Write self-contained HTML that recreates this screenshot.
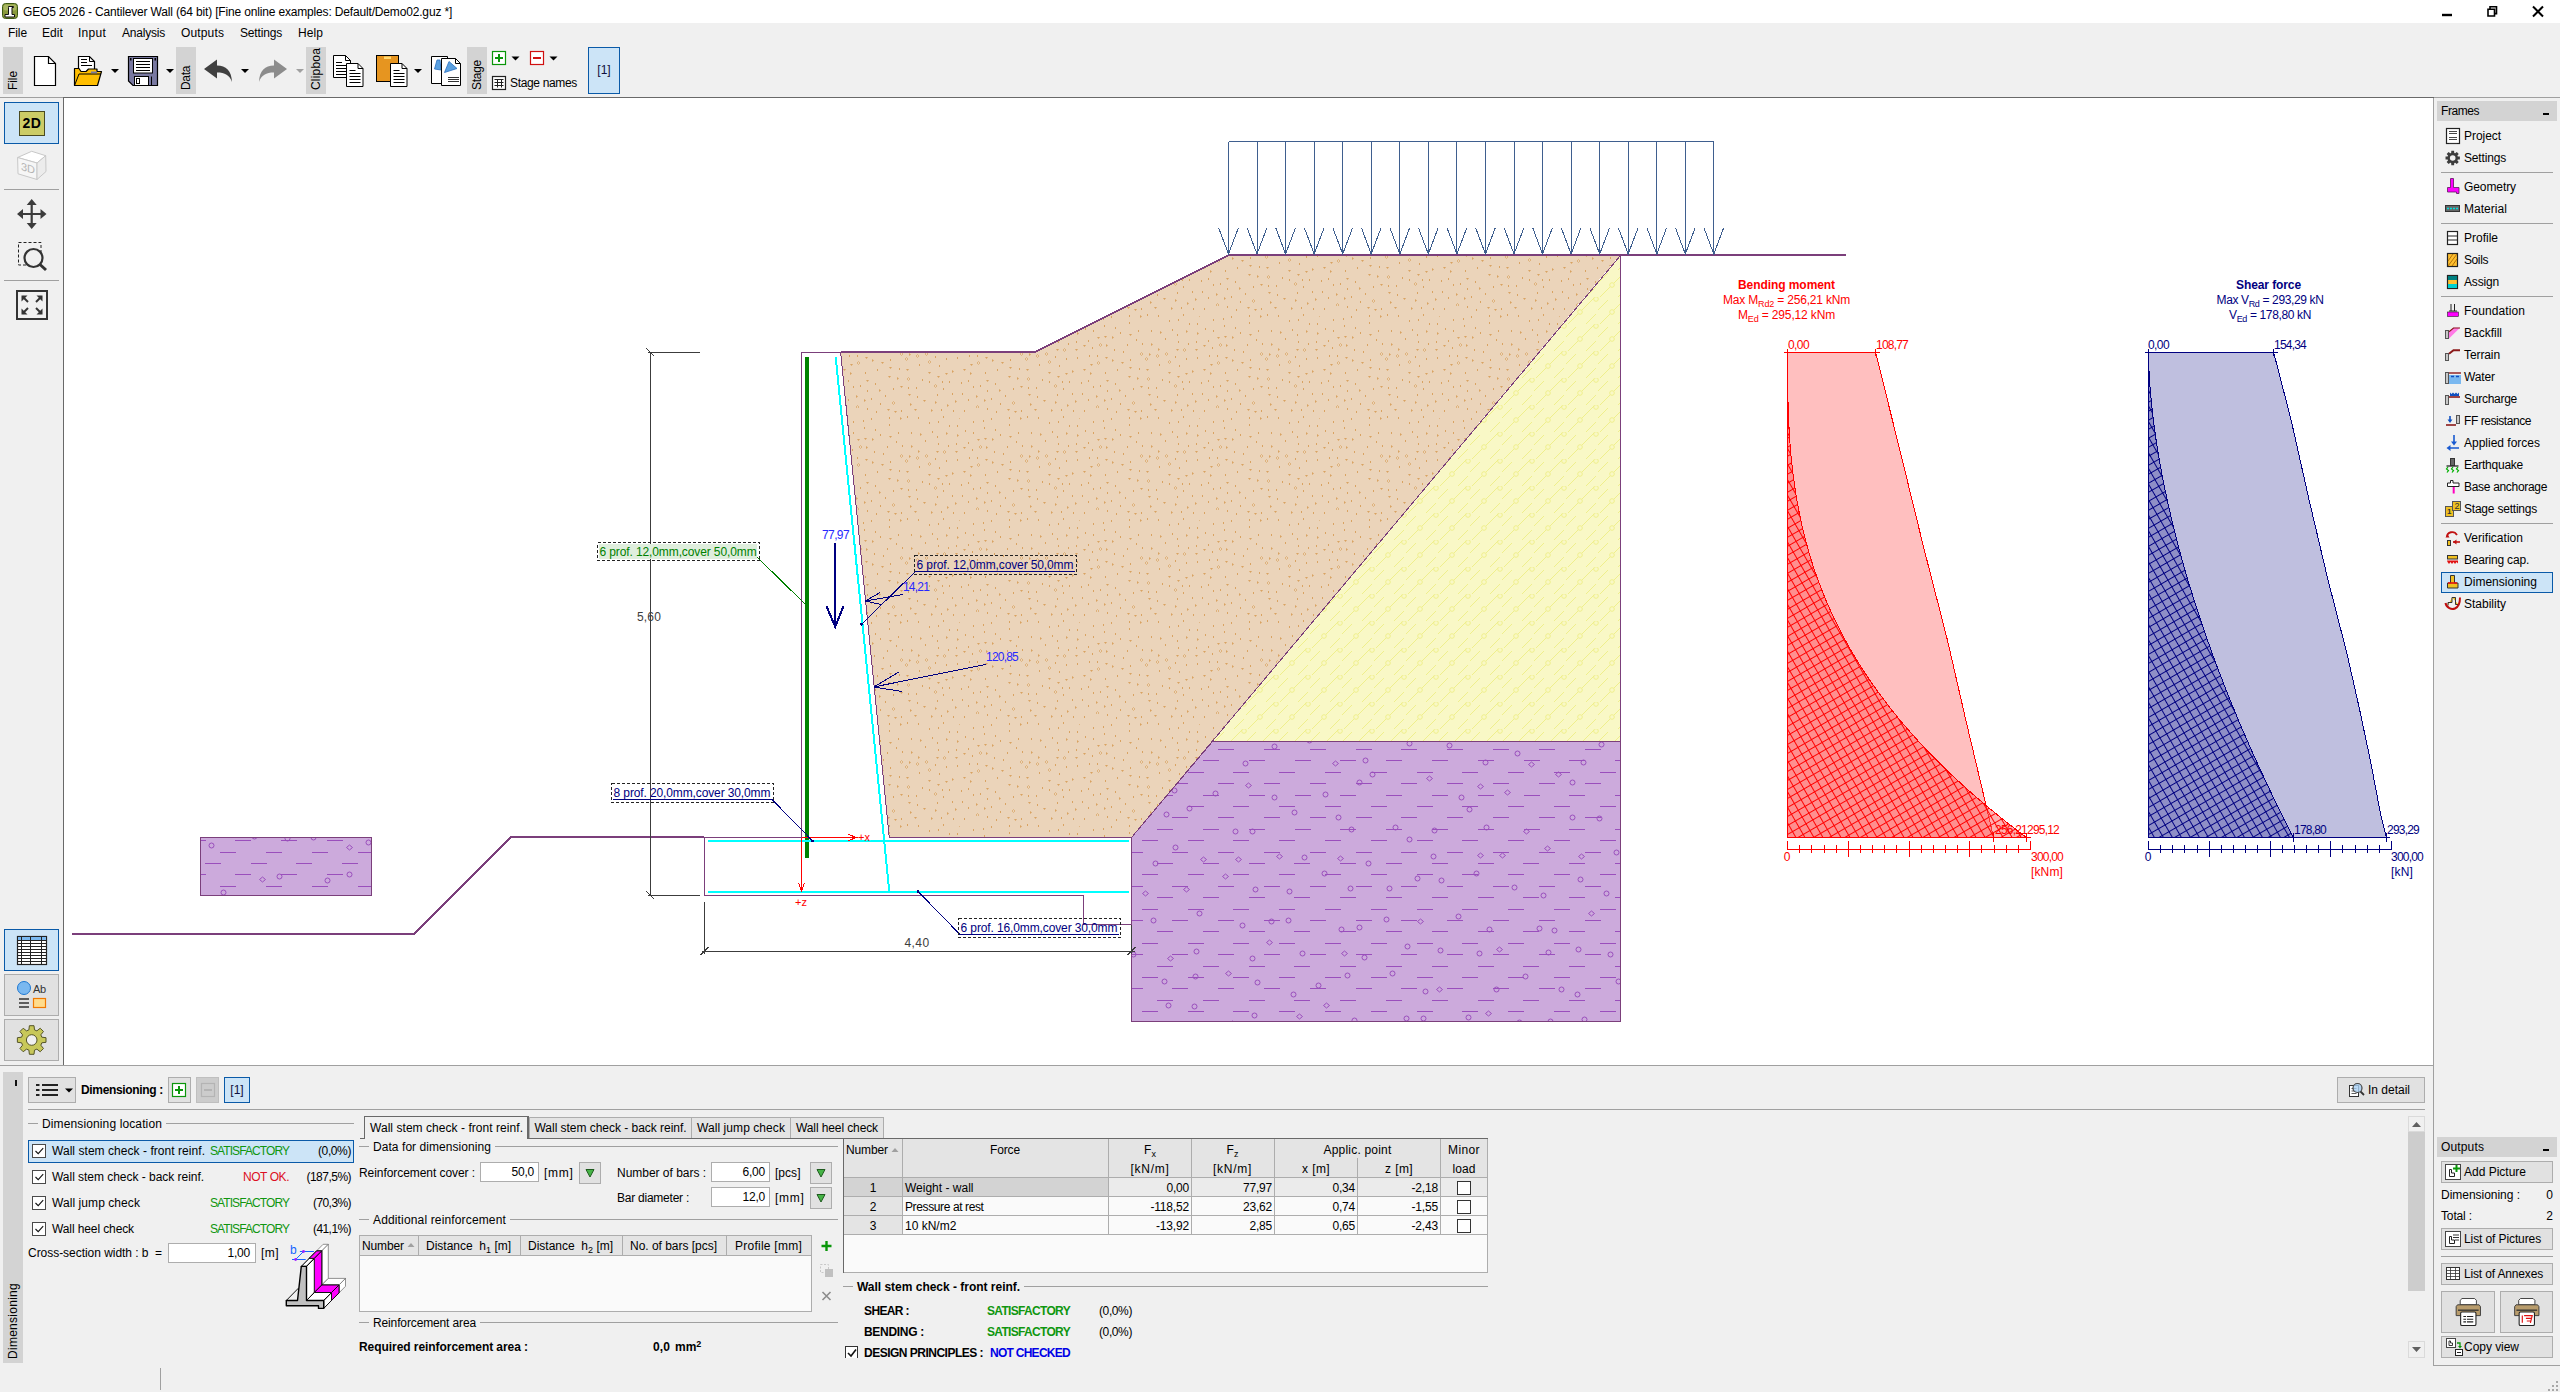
<!DOCTYPE html>
<html><head><meta charset="utf-8"><title>GEO5 2026 - Cantilever Wall</title>
<style>
html,body{margin:0;padding:0}
body{width:2560px;height:1392px;position:relative;overflow:hidden;background:#f0f0f0;font-family:"Liberation Sans",sans-serif;font-size:12px;color:#000}
.b{position:absolute;display:block}
.t{position:absolute;white-space:pre;line-height:16px;height:16px}
sub,sup{font-size:9px;line-height:0}
sub{vertical-align:-3px}
sup{vertical-align:4px}
</style></head><body>
<div class="b" style="left:0px;top:0px;width:2560px;height:23px;background:#fff;"></div>
<svg class="b" style="left:2px;top:3px" width="17" height="17" viewBox="2 3 17 17" ><rect x="2.5" y="3.5" width="15" height="15" rx="3" fill="#8a9a3c" stroke="#3c5a14"/><rect x="3.5" y="4.5" width="13" height="6" rx="2" fill="#b4c070" opacity=".7"/><path d="M8.5 6.5h5v1h-1.5v7h2.5v2.5h-9.5v-2.5h3.5v-7z" fill="#fff" stroke="#111" stroke-width="1"/></svg>
<div class="t" style="left:23px;top:3.5px;letter-spacing:-0.165px;">GEO5 2026 - Cantilever Wall (64 bit) [Fine online examples: Default/Demo02.guz *]</div>
<svg class="b" style="left:2430px;top:0px" width="130" height="23" viewBox="2430 0 130 23" ><path d="M2442 15h10" stroke="#000" stroke-width="2.4" fill="none"/><path d="M2488 9.2h6.5v6.8h-6.5zM2490 9v-2.2h6.5v6.8h-2.2" stroke="#000" stroke-width="1.6" fill="none"/><path d="M2533 6.5l10 10M2543 6.5l-10 10" stroke="#000" stroke-width="2" fill="none"/></svg>
<div class="t" style="left:8px;top:24.5px;letter-spacing:-0.086px;">File</div>
<div class="t" style="left:42px;top:24.5px;letter-spacing:0.082px;">Edit</div>
<div class="t" style="left:78px;top:24.5px;letter-spacing:0.266px;">Input</div>
<div class="t" style="left:122px;top:24.5px;letter-spacing:-0.211px;">Analysis</div>
<div class="t" style="left:181px;top:24.5px;letter-spacing:0.143px;">Outputs</div>
<div class="t" style="left:240px;top:24.5px;letter-spacing:-0.168px;">Settings</div>
<div class="t" style="left:298px;top:24.5px;letter-spacing:0.078px;">Help</div>
<div class="b" style="left:3px;top:47px;width:20px;height:47px;background:#d3d3d3;"></div>
<div class="t" style="left:5px;top:90px;width:19px;transform:rotate(-90deg);transform-origin:0 0;letter-spacing:-0.086px;">File</div>
<div class="b" style="left:176px;top:47px;width:20px;height:47px;background:#d3d3d3;"></div>
<div class="t" style="left:178px;top:90px;width:24px;transform:rotate(-90deg);transform-origin:0 0;letter-spacing:-0.336px;">Data</div>
<div class="b" style="left:306px;top:47px;width:20px;height:47px;background:#d3d3d3;"></div>
<div class="t" style="left:308px;top:90px;width:42px;transform:rotate(-90deg);transform-origin:0 0;letter-spacing:0.185px;">Clipboa</div>
<div class="b" style="left:467px;top:47px;width:20px;height:47px;background:#d3d3d3;"></div>
<div class="t" style="left:469px;top:90px;width:30px;transform:rotate(-90deg);transform-origin:0 0;letter-spacing:-0.269px;">Stage</div>
<svg class="b" style="left:0px;top:45px" width="640" height="52" viewBox="0 45 640 52" ><path d="M34.5 56.5h14l7 7v22h-21z" fill="#fff" stroke="#000" stroke-width="1.2"/><path d="M48.5 56.5v7h7" fill="none" stroke="#000" stroke-width="1.2"/><path d="M78.5 56.5h11l5 5v13h-16z" fill="#fff" stroke="#000" stroke-width="1.2"/><path d="M89.5 56.5v5h5" fill="none" stroke="#000"/><path d="M81 59.5h6M81 62.5h6M81 65.5h11" stroke="#000" stroke-width="1"/><path d="M74.5 68.5h4.5l2 3h5l2.5-2.5h8.5v2.5h4.5l-4 14h-23z" fill="#ffbe00" stroke="#000" stroke-width="1.2" stroke-linejoin="round"/><path d="M74.5 85.5l4.5-11.5h22" fill="none" stroke="#000" stroke-width="1"/><rect x="91" y="71.5" width="6" height="1.8" fill="#7a7aa0"/><path d="M111 69h8l-4 4z" fill="#000"/><path d="M128.5 56.5h29v29h-24.5l-4.5-4.5z" fill="#7878a0" stroke="#000" stroke-width="1.2"/><rect x="133.5" y="58.5" width="19" height="14.5" fill="#fff" stroke="#000"/><path d="M136 61.5h14M136 64.5h14M136 67.5h14M136 70.5h14" stroke="#000" stroke-width="1"/><rect x="134.5" y="76.5" width="14" height="9" fill="#fff" stroke="#000"/><rect x="136.5" y="78.5" width="3" height="5" fill="#fff" stroke="#000"/><rect x="130" y="58" width="1.5" height="2.5" fill="#000"/><rect x="154.5" y="58" width="1.5" height="2.5" fill="#000"/><path d="M151.5 76.5v9" stroke="#000" stroke-width="1"/><path d="M166 69h8l-4 4z" fill="#000"/><path d="M204 69l13-9.5v6c9 0 14.5 5 15 16.5c-2.5-7-7-9.5-15-9.5v6z" fill="#404040"/><path d="M241 69h8l-4 4z" fill="#000"/><path d="M287 69l-13-9.5v6c-9 0-14.5 5-15 16.5c2.5-7 7-9.5 15-9.5v6z" fill="#8c8c8c"/><path d="M296 69h8l-4 4z" fill="#a0a0a0"/><path d="M333.5 55.5h12l5 5v17h-17z" fill="#fff" stroke="#000" stroke-width="1"/><path d="M345.5 55.5v5h5" fill="none" stroke="#000" stroke-width="1"/><path d="M336 62.5h6M336 65.5h12M336 68.5h12M336 71.5h12M336 74.5h12" stroke="#000" stroke-width="1"/><path d="M346.5 63.5h11.5l5 5v18h-16.5z" fill="#fff" stroke="#000" stroke-width="1"/><path d="M358 63.5v5h5" fill="none" stroke="#000" stroke-width="1"/><path d="M349.5 70.5h6M349.5 73.5h11M349.5 76.5h11M349.5 79.5h11M349.5 82.5h11" stroke="#000" stroke-width="1"/><rect x="376.5" y="55.5" width="22" height="26" fill="#e69520" stroke="#000" stroke-width="1"/><rect x="384" y="56.5" width="7" height="2.5" fill="#ffd870"/><path d="M390.5 63.5h11.5l5 5v18h-16.5z" fill="#fff" stroke="#000" stroke-width="1"/><path d="M402 63.5v5h5" fill="none" stroke="#000" stroke-width="1"/><path d="M393.5 70.5h6M393.5 73.5h11M393.5 76.5h11M393.5 79.5h11M393.5 82.5h11" stroke="#000" stroke-width="1"/><path d="M414 69h8l-4 4z" fill="#000"/><path d="M431.5 56.5h16v27h-16z" fill="#fff" stroke="#000"/><path d="M437 60l3 0l1 10l-6.5-1z" fill="#5aa0e0" stroke="#2a70c0" stroke-width=".8"/><path d="M441.5 58.5h14l5 5v22h-19z" fill="#fff" stroke="#000" stroke-width="1"/><path d="M455.5 58.5v5h5" fill="none" stroke="#000" stroke-width="1"/><path d="M449 61.5l8 7l-12.5 4z" fill="#5aa0e0" stroke="#2a70c0" stroke-width=".8"/><path d="M448 77.5h11M448 79.5h11M448 81.5h11" stroke="#333" stroke-width="1"/><rect x="492.5" y="51.5" width="13" height="13" fill="#fff" stroke="#0a960a" stroke-width="1.2"/><path d="M495 58h8M499 54v8" stroke="#0a960a" stroke-width="2"/><path d="M511.5 56.5h8l-4 4z" fill="#000"/><rect x="530.5" y="51.5" width="13" height="13" fill="#fff" stroke="#d01010" stroke-width="1.2"/><path d="M533 58h8" stroke="#d01010" stroke-width="2"/><path d="M549.5 56.5h8l-4 4z" fill="#000"/><rect x="492.5" y="76.5" width="13" height="13" fill="#fff" stroke="#222" stroke-width="1.2"/><path d="M494.5 79.5h9M494.5 82.5h9M494.5 85.5h9M497.5 79.5v8M501.5 79.5v8" stroke="#222" stroke-width="1"/></svg>
<div class="t" style="left:510px;top:74.5px;letter-spacing:-0.335px;">Stage names</div>
<div class="b" style="left:588px;top:47px;width:32px;height:47px;background:#cce4f7;box-shadow:inset 0 0 0 1px #0a5aa8;"></div>
<div class="t" style="left:597.3px;top:62px;color:#101040;">[1]</div>
<div class="b" style="left:0px;top:97px;width:2560px;height:1px;background:#a0a0a0;"></div>
<div class="b" style="left:64px;top:98px;width:2369px;height:967px;background:#fff;"></div>
<div class="b" style="left:63px;top:97px;width:1px;height:969px;background:#696969;"></div>
<div class="b" style="left:63px;top:97px;width:2371px;height:1px;background:#696969;"></div>
<div class="b" style="left:2433px;top:98px;width:1px;height:1268px;background:#a0a0a0;"></div>
<div class="b" style="left:0px;top:1065px;width:2434px;height:1px;background:#a0a0a0;"></div>
<div class="b" style="left:2433px;top:1365px;width:127px;height:1px;background:#a0a0a0;"></div>
<div class="b" style="left:4px;top:102px;width:55px;height:42px;background:#cce4f7;box-shadow:inset 0 0 0 1px #0a5aa8;"></div>
<div class="b" style="left:19px;top:110.5px;width:26px;height:25.5px;background:#cccc66;box-shadow:inset 0 0 0 1px #4a4a20;"></div>
<div class="t" style="left:22.5px;top:114.5px;letter-spacing:0.555px;font-weight:bold;font-size:14px;">2D</div>
<svg class="b" style="left:0px;top:98px" width="63" height="232" viewBox="0 98 63 232" ><path d="M17.6 157.5L31.7 151.3L45.7 155.7L37 163z" fill="#fff" stroke="#c8c8c8"/><path d="M17.6 157.5L37 163V179.5L18 173.8z" fill="#f6f6f6" stroke="#c8c8c8"/><path d="M37 163L45.7 155.7L46 171.5L37 179.5z" fill="#ececec" stroke="#c8c8c8"/><path d="M4 189.5h55M4 280.5h55" stroke="#a0a0a0"/><path d="M31.7 203v22M20.5 214h22" stroke="#3c3c3c" stroke-width="2.2"/><path d="M31.7 199l5 6h-10zM31.7 229l5-6h-10zM17 214l6-5v10zM46.5 214l-6-5v10z" fill="#3c3c3c"/><path d="M18.5 242.5h22.5v22.5h-22.5z" fill="none" stroke="#222" stroke-dasharray="3 2"/><circle cx="33.5" cy="258" r="9" fill="#f0f0f0" stroke="#333" stroke-width="2.2"/><path d="M40 264.5l6 5.5" stroke="#333" stroke-width="3"/><rect x="17" y="291" width="30" height="28" fill="none" stroke="#333" stroke-width="2"/><path d="M22.5 296.5l5.5 5.5" stroke="#333" stroke-width="2"/><path d="M21.5 295.5h6l-6 6z" fill="#333"/><path d="M41.5 296.5l-5.5 5.5" stroke="#333" stroke-width="2"/><path d="M42.5 295.5h-6l6 6z" fill="#333"/><path d="M22.5 313.5l5.5 -5.5" stroke="#333" stroke-width="2"/><path d="M21.5 314.5h6l-6 -6z" fill="#333"/><path d="M41.5 313.5l-5.5 -5.5" stroke="#333" stroke-width="2"/><path d="M42.5 314.5h-6l6 -6z" fill="#333"/></svg>
<div class="t" style="left:20.7px;top:160px;letter-spacing:-0.211px;color:#b4b4b4;font-size:11px;transform:skewY(16deg);">3D</div>
<div class="b" style="left:4px;top:929px;width:55px;height:42px;background:#cce4f7;box-shadow:inset 0 0 0 1px #0a5aa8;"></div>
<div class="b" style="left:4px;top:974px;width:55px;height:42px;background:#e1e1e1;box-shadow:inset 0 0 0 1px #adadad;"></div>
<div class="b" style="left:4px;top:1019px;width:55px;height:42px;background:#e1e1e1;box-shadow:inset 0 0 0 1px #adadad;"></div>
<svg class="b" style="left:0px;top:925px" width="63" height="139" viewBox="0 925 63 139" ><rect x="17.5" y="936.5" width="29" height="28" fill="#fff" stroke="#222" stroke-width="1.2"/><rect x="18" y="937" width="28" height="3" fill="#7ab8f0"/><path d="M17.5 940.5h29" stroke="#222"/><path d="M17.5 943.5h29" stroke="#222"/><path d="M17.5 946.5h29" stroke="#222"/><path d="M17.5 949.5h29" stroke="#222"/><path d="M17.5 952.5h29" stroke="#222"/><path d="M17.5 955.5h29" stroke="#222"/><path d="M17.5 958.5h29" stroke="#222"/><path d="M17.5 961.5h29" stroke="#222"/><path d="M21.5 936.5v28M30.5 936.5v28M41.5 936.5v28" stroke="#222"/><circle cx="24" cy="988" r="6.5" fill="#7ab8f0" stroke="#1e78d2"/><path d="M19 999h10M19 1003h10M19 1007h10" stroke="#333" stroke-width="1.4"/><rect x="33.5" y="998.5" width="12" height="9" fill="#ffdc8c" stroke="#f07800" stroke-width="1.2"/><polygon points="28.9,1029.88 29.39,1025.69 34.01,1025.69 34.5,1029.88 36.88,1030.86 40.19,1028.24 43.46,1031.51 40.84,1034.82 41.82,1037.2 46.01,1037.69 46.01,1042.31 41.82,1042.8 40.84,1045.18 43.46,1048.49 40.19,1051.76 36.88,1049.14 34.5,1050.12 34.01,1054.31 29.39,1054.31 28.9,1050.12 26.52,1049.14 23.21,1051.76 19.94,1048.49 22.56,1045.18 21.58,1042.8 17.39,1042.31 17.39,1037.69 21.58,1037.2 22.56,1034.82 19.94,1031.51 23.21,1028.24 26.52,1030.86" fill="#c8c85a" stroke="#555528" stroke-width="1" stroke-linejoin="round"/><circle cx="31.7" cy="1040" r="5.3" fill="#f0f0f0" stroke="#555528"/></svg>
<div class="t" style="left:33px;top:980.5px;letter-spacing:-0.234px;color:#333;font-size:11px;">Ab</div>
<div class="b" style="left:2437px;top:101px;width:120px;height:20px;background:#d3d3d3;"></div>
<div class="t" style="left:2441px;top:102.5px;letter-spacing:-0.445px;">Frames</div>
<div class="b" style="left:2543px;top:113px;width:6px;height:2px;background:#000;"></div>
<div class="b" style="left:2441px;top:172px;width:112px;height:1px;background:#a0a0a0;"></div>
<div class="b" style="left:2441px;top:223px;width:112px;height:1px;background:#a0a0a0;"></div>
<div class="b" style="left:2441px;top:296px;width:112px;height:1px;background:#a0a0a0;"></div>
<div class="b" style="left:2441px;top:523px;width:112px;height:1px;background:#a0a0a0;"></div>
<div class="b" style="left:2441px;top:571.5px;width:112px;height:21px;background:#cce4f7;box-shadow:inset 0 0 0 1px #0a5aa8;"></div>
<div class="t" style="left:2464px;top:127.5px;letter-spacing:-0.049px;">Project</div>
<div class="t" style="left:2464px;top:149.5px;letter-spacing:-0.168px;">Settings</div>
<div class="t" style="left:2464px;top:178.5px;letter-spacing:-0.084px;">Geometry</div>
<div class="t" style="left:2464px;top:200.5px;letter-spacing:0.039px;">Material</div>
<div class="t" style="left:2464px;top:229.5px;letter-spacing:-0.002px;">Profile</div>
<div class="t" style="left:2464px;top:251.5px;letter-spacing:-0.403px;">Soils</div>
<div class="t" style="left:2464px;top:273.5px;letter-spacing:-0.169px;">Assign</div>
<div class="t" style="left:2464px;top:302.5px;letter-spacing:0.097px;">Foundation</div>
<div class="t" style="left:2464px;top:324.5px;letter-spacing:-0.002px;">Backfill</div>
<div class="t" style="left:2464px;top:346.5px;letter-spacing:-0.098px;">Terrain</div>
<div class="t" style="left:2464px;top:368.5px;letter-spacing:-0.113px;">Water</div>
<div class="t" style="left:2464px;top:390.5px;letter-spacing:-0.262px;">Surcharge</div>
<div class="t" style="left:2464px;top:412.5px;letter-spacing:-0.436px;">FF resistance</div>
<div class="t" style="left:2464px;top:434.5px;letter-spacing:-0.002px;">Applied forces</div>
<div class="t" style="left:2464px;top:456.5px;letter-spacing:-0.236px;">Earthquake</div>
<div class="t" style="left:2464px;top:478.5px;letter-spacing:-0.312px;">Base anchorage</div>
<div class="t" style="left:2464px;top:500.5px;letter-spacing:-0.215px;">Stage settings</div>
<div class="t" style="left:2464px;top:529.5px;letter-spacing:0.025px;">Verification</div>
<div class="t" style="left:2464px;top:551.5px;letter-spacing:-0.197px;">Bearing cap.</div>
<div class="t" style="left:2464px;top:573.5px;letter-spacing:0.023px;">Dimensioning</div>
<div class="t" style="left:2464px;top:595.5px;letter-spacing:-0.002px;">Stability</div>
<svg class="b" style="left:2440px;top:125px" width="25" height="490" viewBox="2440 125 25 490" ><rect x="2446.5" y="128.5" width="13" height="15" fill="#fff" stroke="#222" stroke-width="1.2"/><path d="M2449 131.5h8" stroke="#333" stroke-width=".9"/><path d="M2449 133.5h8" stroke="#333" stroke-width=".9"/><path d="M2449 137.5h8" stroke="#333" stroke-width=".9"/><path d="M2449 139.5h8" stroke="#333" stroke-width=".9"/><path d="M2449 143.5h8" stroke="#333" stroke-width=".9"/><polygon points="2451.13,152.94 2451.32,150.83 2454.08,150.83 2454.27,152.94 2455.17,153.31 2456.79,151.96 2458.74,153.91 2457.39,155.53 2457.76,156.43 2459.87,156.62 2459.87,159.38 2457.76,159.57 2457.39,160.47 2458.74,162.09 2456.79,164.04 2455.17,162.69 2454.27,163.06 2454.08,165.17 2451.32,165.17 2451.13,163.06 2450.23,162.69 2448.61,164.04 2446.66,162.09 2448.01,160.47 2447.64,159.57 2445.53,159.38 2445.53,156.62 2447.64,156.43 2448.01,155.53 2446.66,153.91 2448.61,151.96 2450.23,153.31" fill="#3c3c3c"/><circle cx="2452.7" cy="158" r="2.8" fill="#f0f0f0"/><path d="M2450.5 178.5h3v9h5.5v6h-2.5v-1.5h-9v-4.5h3z" fill="#ff00ff" stroke="#5a1a5a" stroke-width=".8"/><rect x="2445.5" y="205.5" width="14" height="6" fill="#666" stroke="#333"/><path d="M2447 208.5h11" stroke="#00e0e0" stroke-width="1.6" stroke-dasharray="2 1"/><rect x="2447.5" y="231.5" width="10" height="13" fill="#fff" stroke="#222" stroke-width="1.2"/><path d="M2447.5 236h10M2447.5 240h10" stroke="#222"/><rect x="2447.5" y="253.5" width="10" height="13" fill="#ffc030" stroke="#222" stroke-width="1.2"/><path d="M2448 261l5-7M2448 266l9-12M2452 266l5-7" stroke="#a06000" stroke-width=".8"/><rect x="2447.5" y="275.5" width="10" height="13" fill="#ffc030" stroke="#222" stroke-width="1.2"/><rect x="2448" y="276" width="9" height="4" fill="#008080"/><rect x="2448" y="284" width="9" height="4" fill="#00d0d0"/><path d="M2451 304v7M2454.5 304v7M2449 311h8" stroke="#222" fill="none"/><rect x="2447.5" y="312" width="11" height="4.5" fill="#ff00ff" stroke="#222" stroke-width=".6"/><rect x="2445.5" y="330.5" width="3" height="8" fill="#c8c8c8" stroke="#555"/><path d="M2449 338.5v-7l4.5-3.8h6.5z" fill="#ff7ae6"/><path d="M2449 331.8l4.5-3.8h6.5" stroke="#8b1a1a" stroke-width="1.2" fill="none"/><rect x="2445.5" y="353.5" width="3" height="7" fill="#c8c8c8" stroke="#555"/><path d="M2449 353.8l4.5-3.6h6.5" stroke="#8b1a1a" stroke-width="2" fill="none"/><rect x="2445.5" y="372.5" width="3" height="11" fill="#c8c8c8" stroke="#555"/><rect x="2449" y="375" width="12" height="9" fill="#7ab8f0"/><path d="M2449 373h12" stroke="#8b1a1a" stroke-width="1.4"/><path d="M2451 376.5h3M2456 376.5h3" stroke="#1050c0" stroke-width="1.4"/><rect x="2445.5" y="395.5" width="3" height="9" fill="#c8c8c8" stroke="#555"/><path d="M2449 397h11" stroke="#8b1a1a" stroke-width="1.6"/><path d="M2450 396v-3.5l1.5 1.5l1.5-1.5l1.5 1.5l1.5-1.5l1.5 1.5l1.5-1.5v3.5z" fill="#1050c0"/><rect x="2456.5" y="415.5" width="3" height="8" fill="#c8c8c8" stroke="#555"/><path d="M2446 425h10" stroke="#8b1a1a" stroke-width="1.6"/><path d="M2450 416v5" stroke="#1050c0" stroke-width="1.6"/><path d="M2447.5 419.5h5l-2.5 3.5z" fill="#1050c0"/><path d="M2454 435v8M2448 448h11" stroke="#1a5ad0" stroke-width="1.6"/><path d="M2451 441.5h6l-3 4z M2450.5 445v6l-4-3z" fill="#1a5ad0"/><rect x="2450.5" y="458.5" width="4" height="7" fill="#666" stroke="#333"/><path d="M2446.5 466h12" stroke="#333" stroke-width="1.4"/><path d="M2448 467l-1.5 2l2 1.5l-1.5 2M2453 467l-1.5 2l2 1.5l-1.5 2M2458 467l-1.5 2l2 1.5l-1.5 2" stroke="#00b000" stroke-width="1.2" fill="none"/><path d="M2450.5 480.5h2.5v2.5h6v3.5h-11.5v-3.5h3z" fill="#fff" stroke="#222"/><path d="M2453.7 487v6.5" stroke="#ff00c0" stroke-width="2"/><rect x="2445.5" y="506.5" width="8" height="10" fill="#f0c020" stroke="#555"/><rect x="2452.5" y="501.5" width="8" height="9" fill="#f0c020" stroke="#555"/><path d="M2447 537c0-5 7-7 10-2" stroke="#c01010" stroke-width="1.8" fill="none"/><path d="M2445.5 537.5h4l-2-3.5z" fill="#c01010"/><rect x="2447.5" y="540.5" width="3" height="5" fill="#f0c020" stroke="#333"/><path d="M2453 542h7" stroke="#c01010" stroke-width="1.6"/><path d="M2453 542l3.5-2.5v5z" fill="#c01010"/><rect x="2447.5" y="555.5" width="10" height="3.5" fill="#f0c020" stroke="#333"/><path d="M2447 560.5h11v3l-1.5-1.5l-1.5 2l-1.5-2l-1.5 2l-1.5-2l-1.5 2l-1.5-2z" fill="#e01010"/><path d="M2450.5 575.5h4v7.5h3.5v5h-10.5v-5h3z" fill="#f0c020" stroke="#333"/><path d="M2448 583h9" stroke="#e01010" stroke-width="1.6"/><path d="M2452 597.5h3.5v7h3M2452 597.5v5h-4v3" stroke="#333" fill="#f0c020"/><path d="M2445.5 603c1 5 6 7 9.5 5.5s5-5 5-11" stroke="#c01010" stroke-width="2" fill="none"/></svg>
<div class="t" style="left:2447px;top:504px;color:#333;font-weight:bold;font-size:8px;">1</div>
<div class="t" style="left:2454.5px;top:498px;color:#333;font-size:9px;">2</div>
<div class="b" style="left:2437px;top:1137px;width:120px;height:20px;background:#d3d3d3;"></div>
<div class="t" style="left:2441px;top:1138.5px;letter-spacing:0.143px;">Outputs</div>
<div class="b" style="left:2543px;top:1149px;width:6px;height:2px;background:#000;"></div>
<div class="b" style="left:2441px;top:1161px;width:112px;height:22px;background:#e1e1e1;box-shadow:inset 0 0 0 1px #adadad;"></div>
<div class="t" style="left:2464px;top:1163.5px;letter-spacing:-0.001px;">Add Picture</div>
<div class="t" style="left:2441px;top:1186.5px;letter-spacing:-0.027px;">Dimensioning :</div>
<div class="t" style="left:2546.3px;top:1186.5px;">0</div>
<div class="t" style="left:2441px;top:1207.5px;letter-spacing:-0.143px;">Total :</div>
<div class="t" style="left:2546.3px;top:1207.5px;">2</div>
<div class="b" style="left:2441px;top:1228px;width:112px;height:22px;background:#e1e1e1;box-shadow:inset 0 0 0 1px #adadad;"></div>
<div class="t" style="left:2464px;top:1230.5px;letter-spacing:-0.104px;">List of Pictures</div>
<div class="b" style="left:2441px;top:1256px;width:112px;height:1px;background:#a0a0a0;"></div>
<div class="b" style="left:2441px;top:1263px;width:112px;height:22px;background:#e1e1e1;box-shadow:inset 0 0 0 1px #adadad;"></div>
<div class="t" style="left:2464px;top:1265.5px;letter-spacing:-0.157px;">List of Annexes</div>
<div class="b" style="left:2441px;top:1291px;width:54px;height:42px;background:#e1e1e1;box-shadow:inset 0 0 0 1px #adadad;"></div>
<div class="b" style="left:2500px;top:1291px;width:53px;height:42px;background:#e1e1e1;box-shadow:inset 0 0 0 1px #adadad;"></div>
<div class="b" style="left:2441px;top:1336px;width:112px;height:22px;background:#e1e1e1;box-shadow:inset 0 0 0 1px #adadad;"></div>
<div class="t" style="left:2464px;top:1338.5px;letter-spacing:-0.04px;">Copy view</div>
<svg class="b" style="left:2440px;top:1160px" width="116" height="200" viewBox="2440 1160 116 200" ><rect x="2445.5" y="1164.5" width="15" height="15" fill="#fff" stroke="#444"/><path d="M2449.5 1169.5v7h5v-3.5h-3v-3.5z" fill="none" stroke="#222"/><path d="M2453 1168.5h7M2456.5 1165v7" stroke="#0a960a" stroke-width="2"/><rect x="2445.5" y="1231.5" width="15" height="15" fill="#fff" stroke="#444"/><path d="M2449.5 1236.5v7h5v-3.5h-3v-3.5z" fill="none" stroke="#222"/><path d="M2453 1235h6M2453 1237.5h6M2455 1240h4" stroke="#333"/><rect x="2446.5" y="1267.5" width="13" height="12" fill="#fff" stroke="#333"/><path d="M2446.5 1270.5h13M2446.5 1273.5h13M2446.5 1276.5h13M2450.5 1267.5v12M2455.5 1267.5v12" stroke="#333" stroke-width=".8"/><g transform="translate(2468.3 1312) scale(.9) translate(-2468 -1311)"><path d="M2461 1296h14l2 2v5h-18v-5z" fill="#fff" stroke="#333"/><path d="M2456 1303h24l1.5 2v10h-27v-10z" fill="#b89c6c" stroke="#333"/><path d="M2456.5 1309h23" stroke="#333" stroke-width="1.5"/><rect x="2459.5" y="1311" width="17" height="15" rx="1.5" fill="#fff" stroke="#222" stroke-width="1.2"/><path d="M2462.5 1316h11M2462.5 1319h11M2462.5 1322h11" stroke="#222" stroke-width="1.2" stroke-dasharray="3 1 7"/></g><g transform="translate(2526.8 1312) scale(.9) translate(-2526.5 -1311)"><path d="M2519.5 1296h14l2 2v5h-18v-5z" fill="#fff" stroke="#333"/><path d="M2514.5 1303h24l1.5 2v10h-27v-10z" fill="#b89c6c" stroke="#333"/><path d="M2515 1309h23" stroke="#333" stroke-width="1.5"/><rect x="2518" y="1311" width="17" height="15" rx="1.5" fill="#fff" stroke="#222" stroke-width="1.2"/><path d="M2521.5 1315v8M2523.5 1315h9l-2 8M2525.5 1318h6M2526.5 1321h5" stroke="#e01010" stroke-width="1.3" fill="none"/></g><rect x="2446.5" y="1338.5" width="9" height="9" fill="#fff" stroke="#444"/><path d="M2449 1341v4.5h3.5v-2.5h-2v-2z" fill="none" stroke="#222" stroke-width=".9"/><rect x="2455.5" y="1349.5" width="7" height="6" fill="#fff" stroke="#222"/><path d="M2457 1352.5h4" stroke="#222"/><path d="M2457 1343h3v4" stroke="#0a960a" stroke-width="1.3" fill="none"/><path d="M2458 1346h4l-2 2.5z" fill="#0a960a"/></svg>
<svg class="b" style="left:2540px;top:1375px" width="20" height="17" viewBox="2540 1375 20 17" ><rect x="2556" y="1381" width="2" height="2" fill="#a8a8a8"/><rect x="2556" y="1385" width="2" height="2" fill="#a8a8a8"/><rect x="2556" y="1389" width="2" height="2" fill="#a8a8a8"/><rect x="2552" y="1385" width="2" height="2" fill="#a8a8a8"/><rect x="2552" y="1389" width="2" height="2" fill="#a8a8a8"/><rect x="2548" y="1389" width="2" height="2" fill="#a8a8a8"/></svg>
<div class="b" style="left:3px;top:1072px;width:20px;height:291px;background:#d3d3d3;"></div>
<div class="b" style="left:15px;top:1080px;width:2px;height:6px;background:#111;"></div>
<div class="t" style="left:5px;top:1359px;width:76px;letter-spacing:0.273px;transform:rotate(-90deg);transform-origin:0 0;">Dimensioning</div>
<div class="b" style="left:28px;top:1077px;width:48px;height:26px;background:#e1e1e1;box-shadow:inset 0 0 0 1px #adadad;"></div>
<div class="b" style="left:168px;top:1077px;width:23px;height:26px;background:#e1e1e1;box-shadow:inset 0 0 0 1px #adadad;"></div>
<div class="b" style="left:196px;top:1077px;width:23px;height:26px;background:#cccccc;box-shadow:inset 0 0 0 1px #bfbfbf;"></div>
<div class="b" style="left:224px;top:1077px;width:26px;height:26px;background:#cce4f7;box-shadow:inset 0 0 0 1px #0a5aa8;"></div>
<div class="t" style="left:81px;top:1081.5px;letter-spacing:-0.331px;font-weight:bold;">Dimensioning :</div>
<div class="t" style="left:230.3px;top:1081.5px;color:#101040;">[1]</div>
<svg class="b" style="left:28px;top:1077px" width="222" height="26" viewBox="28 1077 222 26" ><path d="M36 1085h3.5M36 1090h3.5M36 1095h3.5" stroke="#222" stroke-width="2.2"/><path d="M42 1085h16M42 1090h16M42 1095h16" stroke="#222" stroke-width="2.2"/><path d="M65 1088.5h8l-4 4z" fill="#000"/><rect x="172.5" y="1083.5" width="13" height="13" fill="#fff" stroke="#0a960a" stroke-width="1.2"/><path d="M175 1090h8M179 1086v8" stroke="#0a960a" stroke-width="2"/><rect x="201.5" y="1083.5" width="13" height="13" fill="none" stroke="#b4b4b4" stroke-width="1.2"/><path d="M204 1090h8" stroke="#b4b4b4" stroke-width="2"/></svg>
<div class="b" style="left:28px;top:1109px;width:2397px;height:1px;background:#a0a0a0;"></div>
<div class="b" style="left:2337px;top:1077px;width:88px;height:26px;background:#e1e1e1;box-shadow:inset 0 0 0 1px #adadad;"></div>
<div class="t" style="left:2368px;top:1081.5px;letter-spacing:-0.002px;">In detail</div>
<svg class="b" style="left:2345px;top:1080px" width="23" height="20" viewBox="2345 1080 23 20" ><rect x="2349.5" y="1085.5" width="9" height="11" fill="#fff" stroke="#333"/><path d="M2351.5 1088.5h5M2351.5 1091h5M2351.5 1093.5h5" stroke="#333" stroke-width=".8"/><circle cx="2357.5" cy="1088" r="4.5" fill="#a8d0f4" fill-opacity=".8" stroke="#444" stroke-width="1.2"/><path d="M2360.5 1091.5l3.5 3.5" stroke="#333" stroke-width="1.8"/></svg>
<div class="b" style="left:2408px;top:1116px;width:17px;height:242px;background:#f0f0f0;"></div>
<div class="b" style="left:2408px;top:1132px;width:17px;height:159px;background:#cdcdcd;"></div>
<div class="b" style="left:2408px;top:1116px;width:17px;height:16px;box-shadow:inset 0 0 0 1px #dadada;"></div>
<div class="b" style="left:2408px;top:1341px;width:17px;height:17px;box-shadow:inset 0 0 0 1px #dadada;"></div>
<svg class="b" style="left:2408px;top:1116px" width="17" height="242" viewBox="2408 1116 17 242" ><path d="M2412 1127h9l-4.5-5zM2412 1347h9l-4.5 5z" fill="#606060"/></svg>
<div class="b" style="left:28px;top:1123px;width:326px;height:1px;background:#a0a0a0;"></div>
<div class="b" style="left:38px;top:1118px;width:128px;height:12px;background:#f0f0f0;"></div>
<div class="t" style="left:42px;top:1115.5px;letter-spacing:0.124px;">Dimensioning location</div>
<div class="b" style="left:28px;top:1139.5px;width:326px;height:23px;background:#cce4f7;box-shadow:inset 0 0 0 1px #0a5aa8;"></div>
<div class="t" style="left:52px;top:1142.5px;letter-spacing:0.048px;">Wall stem check - front reinf.</div>
<div class="t" style="left:210px;top:1142.5px;letter-spacing:-0.917px;color:#0f960f;">SATISFACTORY</div>
<div class="t" style="left:318px;top:1142.5px;letter-spacing:-0.391px;">(0,0%)</div>
<div class="t" style="left:52px;top:1168.5px;letter-spacing:-0.031px;">Wall stem check - back reinf.</div>
<div class="t" style="left:243px;top:1168.5px;letter-spacing:-0.442px;color:#dc0f23;">NOT OK.</div>
<div class="t" style="left:306.5px;top:1168.5px;letter-spacing:-0.523px;">(187,5%)</div>
<div class="t" style="left:52px;top:1194.5px;letter-spacing:0.072px;">Wall jump check</div>
<div class="t" style="left:210px;top:1194.5px;letter-spacing:-0.917px;color:#0f960f;">SATISFACTORY</div>
<div class="t" style="left:313px;top:1194.5px;letter-spacing:-0.574px;">(70,3%)</div>
<div class="t" style="left:52px;top:1220.5px;letter-spacing:-0.106px;">Wall heel check</div>
<div class="t" style="left:210px;top:1220.5px;letter-spacing:-0.917px;color:#0f960f;">SATISFACTORY</div>
<div class="t" style="left:313px;top:1220.5px;letter-spacing:-0.574px;">(41,1%)</div>
<svg class="b" style="left:28px;top:1139px" width="22" height="101" viewBox="28 1139 22 101" ><rect x="32.5" y="1144.5" width="13" height="13" fill="#fff" stroke="#4a4a4a"/><path d="M35.5 1151l2.7 2.7l5-5.5" stroke="#111" stroke-width="1.1" fill="none"/><rect x="32.5" y="1170.5" width="13" height="13" fill="#fff" stroke="#4a4a4a"/><path d="M35.5 1177l2.7 2.7l5-5.5" stroke="#111" stroke-width="1.1" fill="none"/><rect x="32.5" y="1196.5" width="13" height="13" fill="#fff" stroke="#4a4a4a"/><path d="M35.5 1203l2.7 2.7l5-5.5" stroke="#111" stroke-width="1.1" fill="none"/><rect x="32.5" y="1222.5" width="13" height="13" fill="#fff" stroke="#4a4a4a"/><path d="M35.5 1229l2.7 2.7l5-5.5" stroke="#111" stroke-width="1.1" fill="none"/></svg>
<div class="t" style="left:28px;top:1244.5px;letter-spacing:-0.04px;">Cross-section width : b  =</div>
<div class="b" style="left:168px;top:1243px;width:88px;height:20px;background:#fff;box-shadow:inset 0 0 0 1px #adadad;"></div>
<div class="t" style="left:227.4px;top:1244.5px;letter-spacing:-0.175px;">1,00</div>
<div class="t" style="left:261px;top:1244.5px;letter-spacing:0.448px;">[m]</div>
<svg class="b" style="left:284px;top:1240px" width="66" height="72" viewBox="284 1240 66 72" ><path d="M286.3 1300.5L298.5 1288.1" stroke="#111" stroke-width="1"/><polygon points="301.3,1266.4 306.5,1266.4 328.3,1244.3 323.1,1244.3" fill="#fff" stroke="#666" stroke-width="0.7" stroke-linejoin="round" /><polygon points="306.5,1266.4 306.5,1300.5 328.3,1278.4 328.3,1244.3" fill="#fff" stroke="#666" stroke-width="0.7" stroke-linejoin="round" /><polygon points="306.5,1300.5 323.7,1300.5 345.5,1278.4 328.3,1278.4" fill="#fff" stroke="#666" stroke-width="0.7" stroke-linejoin="round" /><polygon points="323.7,1300.5 323.7,1308.4 345.5,1286.3 345.5,1278.4" fill="#fff" stroke="#666" stroke-width="0.7" stroke-linejoin="round" /><polygon points="301.3,1266.4 306.5,1266.4 321.8,1250.9 316.6,1250.9" fill="none" stroke="#111" stroke-width="1" stroke-linejoin="round" /><polygon points="306.5,1266.4 306.5,1300.5 321.8,1285 321.8,1250.9" fill="none" stroke="#111" stroke-width="1" stroke-linejoin="round" /><polygon points="306.5,1300.5 323.7,1300.5 339,1285 321.8,1285" fill="none" stroke="#111" stroke-width="1" stroke-linejoin="round" /><polygon points="323.7,1300.5 323.7,1308.4 339,1292.9 339,1285" fill="none" stroke="#111" stroke-width="1" stroke-linejoin="round" /><polygon points="309.1,1258.4 314.3,1258.4 321.8,1250.9 316.6,1250.9" fill="#ff00ff" stroke="#111" stroke-width="1" stroke-linejoin="round" /><polygon points="314.3,1258.4 314.3,1292.5 321.8,1285 321.8,1250.9" fill="#ff00ff" stroke="#111" stroke-width="1" stroke-linejoin="round" /><polygon points="314.3,1292.5 331.5,1292.5 339,1285 321.8,1285" fill="#ff00ff" stroke="#111" stroke-width="1" stroke-linejoin="round" /><polygon points="331.5,1292.5 331.5,1300.4 339,1292.9 339,1285" fill="#ff00ff" stroke="#111" stroke-width="1" stroke-linejoin="round" /><polygon points="286.3,1305.7 286.3,1300.5 297.5,1300.5 301.3,1266.4 306.5,1266.4 306.5,1300.5 323.7,1300.5 323.7,1308.4 318.5,1308.4 318.5,1305.7" fill="#c0c0c0" stroke="#000" stroke-width="1.4" stroke-linejoin="round" /><path d="M292 1259.5h13.7M299.9 1251.5h14M295.6 1259.5L303.5 1251.5" stroke="#1464ff" stroke-width="1" fill="none"/><circle cx="295.6" cy="1259.5" r="1.4" fill="#a020ff"/><circle cx="303.5" cy="1251.5" r="1.4" fill="#a020ff"/></svg>
<div class="t" style="left:290px;top:1241.5px;color:#1464ff;">b</div>
<div class="b" style="left:160px;top:1368px;width:1px;height:22px;background:#a0a0a0;"></div>
<div class="b" style="left:529px;top:1117px;width:163px;height:22px;background:#e4e4e4;box-shadow:inset 0 0 0 1px #adadad;"></div>
<div class="t" style="left:534.5px;top:1119.5px;letter-spacing:-0.031px;">Wall stem check - back reinf.</div>
<div class="b" style="left:691px;top:1117px;width:100px;height:22px;background:#e4e4e4;box-shadow:inset 0 0 0 1px #adadad;"></div>
<div class="t" style="left:697px;top:1119.5px;letter-spacing:0.072px;">Wall jump check</div>
<div class="b" style="left:790px;top:1117px;width:94px;height:22px;background:#e4e4e4;box-shadow:inset 0 0 0 1px #adadad;"></div>
<div class="t" style="left:796px;top:1119.5px;letter-spacing:-0.106px;">Wall heel check</div>
<div class="b" style="left:360px;top:1138px;width:5px;height:1px;background:#696969;"></div>
<div class="b" style="left:528px;top:1138px;width:356px;height:1px;background:#696969;"></div>
<div class="b" style="left:364px;top:1116px;width:165px;height:23px;background:#f0f0f0;border:1px solid #696969;border-bottom:none;border-right-width:2px;box-sizing:border-box;"></div>
<div class="t" style="left:370px;top:1120px;letter-spacing:0.048px;">Wall stem check - front reinf.</div>
<div class="b" style="left:359px;top:1146px;width:479px;height:1px;background:#a0a0a0;"></div>
<div class="b" style="left:369px;top:1141px;width:126px;height:12px;background:#f0f0f0;"></div>
<div class="t" style="left:373px;top:1138.5px;letter-spacing:0.061px;">Data for dimensioning</div>
<div class="t" style="left:359px;top:1164.5px;letter-spacing:-0.065px;">Reinforcement cover :</div>
<div class="b" style="left:480px;top:1162px;width:59px;height:20px;background:#fff;box-shadow:inset 0 0 0 1px #adadad;"></div>
<div class="t" style="left:511.4px;top:1163.5px;letter-spacing:-0.175px;">50,0</div>
<div class="t" style="left:544px;top:1164.5px;letter-spacing:0.711px;">[mm]</div>
<div class="b" style="left:579px;top:1162px;width:22px;height:22px;background:#e1e1e1;box-shadow:inset 0 0 0 1px #adadad;"></div>
<svg class="b" style="left:579px;top:1162px" width="22" height="22" viewBox="579 1162 22 22" ><path d="M586 1169.5h8l-4 7.5z" fill="#46b446" stroke="#1e5a1e" stroke-width="1"/></svg>
<div class="t" style="left:617px;top:1164.5px;letter-spacing:-0.021px;">Number of bars :</div>
<div class="b" style="left:711px;top:1162px;width:59px;height:20px;background:#fff;box-shadow:inset 0 0 0 1px #adadad;"></div>
<div class="t" style="left:742.4px;top:1163.5px;letter-spacing:-0.175px;">6,00</div>
<div class="t" style="left:775px;top:1164.5px;letter-spacing:0.034px;">[pcs]</div>
<div class="b" style="left:810px;top:1162px;width:22px;height:22px;background:#e1e1e1;box-shadow:inset 0 0 0 1px #adadad;"></div>
<svg class="b" style="left:810px;top:1162px" width="22" height="22" viewBox="810 1162 22 22" ><path d="M817 1169.5h8l-4 7.5z" fill="#46b446" stroke="#1e5a1e" stroke-width="1"/></svg>
<div class="t" style="left:617px;top:1189.5px;letter-spacing:-0.239px;">Bar diameter :</div>
<div class="b" style="left:711px;top:1187px;width:59px;height:20px;background:#fff;box-shadow:inset 0 0 0 1px #adadad;"></div>
<div class="t" style="left:742.4px;top:1188.5px;letter-spacing:-0.175px;">12,0</div>
<div class="t" style="left:775px;top:1189.5px;letter-spacing:0.711px;">[mm]</div>
<div class="b" style="left:810px;top:1187px;width:22px;height:22px;background:#e1e1e1;box-shadow:inset 0 0 0 1px #adadad;"></div>
<svg class="b" style="left:810px;top:1187px" width="22" height="22" viewBox="810 1187 22 22" ><path d="M817 1194.5h8l-4 7.5z" fill="#46b446" stroke="#1e5a1e" stroke-width="1"/></svg>
<div class="b" style="left:359px;top:1219px;width:479px;height:1px;background:#a0a0a0;"></div>
<div class="b" style="left:369px;top:1214px;width:141px;height:12px;background:#f0f0f0;"></div>
<div class="t" style="left:373px;top:1211.5px;letter-spacing:0.15px;">Additional reinforcement</div>
<div class="b" style="left:359px;top:1235px;width:453px;height:77px;background:#fafafa;box-shadow:inset 0 0 0 1px #adadad;"></div>
<div class="b" style="left:360px;top:1236px;width:451px;height:19px;background:#e4e4e4;"></div>
<div class="b" style="left:360px;top:1254.5px;width:451px;height:1px;background:#adadad;"></div>
<div class="b" style="left:418px;top:1236px;width:1px;height:19px;background:#adadad;"></div>
<div class="b" style="left:520px;top:1236px;width:1px;height:19px;background:#adadad;"></div>
<div class="b" style="left:622px;top:1236px;width:1px;height:19px;background:#adadad;"></div>
<div class="b" style="left:726px;top:1236px;width:1px;height:19px;background:#adadad;"></div>
<div class="t" style="left:362px;top:1238px;letter-spacing:-0.115px;">Number</div>
<div class="t" style="left:426px;top:1238px;letter-spacing:0px;">Distance  h<sub>1</sub> [m]</div>
<div class="t" style="left:528px;top:1238px;letter-spacing:0px;">Distance  h<sub>2</sub> [m]</div>
<div class="t" style="left:630px;top:1238px;letter-spacing:-0.019px;">No. of bars [pcs]</div>
<div class="t" style="left:735px;top:1238px;letter-spacing:0.25px;">Profile [mm]</div>
<svg class="b" style="left:404px;top:1240px" width="14" height="10" viewBox="404 1240 14 10" ><path d="M407.5 1247h7l-3.5-4z" fill="#a0a0a0"/></svg>
<svg class="b" style="left:818px;top:1236px" width="20" height="70" viewBox="818 1236 20 70" ><path d="M821.5 1246h10M826.5 1241v10" stroke="#0a960a" stroke-width="2.4"/><rect x="820.5" y="1264.5" width="8" height="8" fill="none" stroke="#c8c8c8" stroke-dasharray="2 1.5"/><rect x="825" y="1269" width="8" height="8" fill="#c0c0c0"/><path d="M822.5 1292l8 8M830.5 1292l-8 8" stroke="#8c8c8c" stroke-width="1.6"/></svg>
<div class="b" style="left:359px;top:1322px;width:479px;height:1px;background:#a0a0a0;"></div>
<div class="b" style="left:369px;top:1317px;width:111px;height:12px;background:#f0f0f0;"></div>
<div class="t" style="left:373px;top:1314.5px;letter-spacing:-0.132px;">Reinforcement area</div>
<div class="t" style="left:359px;top:1338.5px;letter-spacing:-0.058px;font-weight:bold;">Required reinforcement area :</div>
<div class="t" style="left:653px;top:1338.5px;letter-spacing:0.109px;font-weight:bold;">0,0</div>
<div class="t" style="left:675px;top:1338.5px;font-weight:bold;">mm<sup>2</sup></div>
<div class="b" style="left:843px;top:1138px;width:645px;height:135px;background:#fafafa;box-shadow:inset 0 0 0 1px #adadad;"></div>
<div class="b" style="left:843px;top:1138px;width:645px;height:1px;background:#696969;"></div>
<div class="b" style="left:843px;top:1138px;width:1px;height:135px;background:#696969;"></div>
<div class="b" style="left:844px;top:1139px;width:643px;height:38px;background:#e4e4e4;"></div>
<div class="b" style="left:844px;top:1178px;width:264px;height:18px;background:#d3d3d3;"></div>
<div class="b" style="left:1109px;top:1178px;width:378px;height:18px;background:#ebebeb;"></div>
<div class="b" style="left:844px;top:1197px;width:58px;height:37px;background:#e4e4e4;"></div>
<div class="b" style="left:844px;top:1177px;width:643px;height:1px;background:#adadad;"></div>
<div class="b" style="left:844px;top:1196px;width:643px;height:1px;background:#adadad;"></div>
<div class="b" style="left:844px;top:1215px;width:643px;height:1px;background:#adadad;"></div>
<div class="b" style="left:844px;top:1234px;width:643px;height:1px;background:#adadad;"></div>
<div class="b" style="left:902px;top:1139px;width:1px;height:95.5px;background:#adadad;"></div>
<div class="b" style="left:1108px;top:1139px;width:1px;height:95.5px;background:#adadad;"></div>
<div class="b" style="left:1191px;top:1139px;width:1px;height:95.5px;background:#adadad;"></div>
<div class="b" style="left:1274px;top:1139px;width:1px;height:95.5px;background:#adadad;"></div>
<div class="b" style="left:1357px;top:1158px;width:1px;height:76.5px;background:#adadad;"></div>
<div class="b" style="left:1440px;top:1139px;width:1px;height:95.5px;background:#adadad;"></div>
<div class="t" style="left:846px;top:1141.5px;letter-spacing:-0.115px;">Number</div>
<svg class="b" style="left:888px;top:1144px" width="14" height="12" viewBox="888 1144 14 12" ><path d="M891.5 1152h7l-3.5-4z" fill="#a0a0a0"/></svg>
<div class="t" style="left:990px;top:1141.5px;letter-spacing:-0.134px;">Force</div>
<div class="t" style="left:1144.1px;top:1142px;">F<sub>x</sub></div>
<div class="t" style="left:1130.5px;top:1160.5px;letter-spacing:0.724px;">[kN/m]</div>
<div class="t" style="left:1226.6px;top:1142px;">F<sub>z</sub></div>
<div class="t" style="left:1213px;top:1160.5px;letter-spacing:0.724px;">[kN/m]</div>
<div class="t" style="left:1323.5px;top:1141.5px;letter-spacing:0.203px;">Applic. point</div>
<div class="t" style="left:1302px;top:1160.5px;letter-spacing:0.403px;">x [m]</div>
<div class="t" style="left:1385px;top:1160.5px;letter-spacing:0.403px;">z [m]</div>
<div class="t" style="left:1448px;top:1141.5px;letter-spacing:0.397px;">Minor</div>
<div class="t" style="left:1452.5px;top:1160.5px;letter-spacing:0.078px;">load</div>
<div class="t" style="left:869.7px;top:1180px;">1</div>
<div class="t" style="left:905px;top:1180px;">Weight - wall</div>
<div class="t" style="left:1166.4px;top:1180px;letter-spacing:-0.175px;">0,00</div>
<div class="t" style="left:1242.9px;top:1180px;letter-spacing:-0.18px;">77,97</div>
<div class="t" style="left:1332.4px;top:1180px;letter-spacing:-0.175px;">0,34</div>
<div class="t" style="left:1411.5px;top:1180px;letter-spacing:-0.164px;">-2,18</div>
<div class="t" style="left:869.7px;top:1199px;">2</div>
<div class="t" style="left:905px;top:1199px;letter-spacing:-0.386px;">Pressure at rest</div>
<div class="t" style="left:1150.4px;top:1199px;letter-spacing:-0.171px;">-118,52</div>
<div class="t" style="left:1242.9px;top:1199px;letter-spacing:-0.18px;">23,62</div>
<div class="t" style="left:1332.4px;top:1199px;letter-spacing:-0.175px;">0,74</div>
<div class="t" style="left:1411.5px;top:1199px;letter-spacing:-0.164px;">-1,55</div>
<div class="t" style="left:869.7px;top:1218px;">3</div>
<div class="t" style="left:905px;top:1218px;">10 kN/m2</div>
<div class="t" style="left:1156px;top:1218px;letter-spacing:-0.17px;">-13,92</div>
<div class="t" style="left:1249.4px;top:1218px;letter-spacing:-0.175px;">2,85</div>
<div class="t" style="left:1332.4px;top:1218px;letter-spacing:-0.175px;">0,65</div>
<div class="t" style="left:1411.5px;top:1218px;letter-spacing:-0.164px;">-2,43</div>
<svg class="b" style="left:1456px;top:1178px" width="17" height="57" viewBox="1456 1178 17 57" ><rect x="1457.5" y="1181.5" width="13" height="13" fill="#fff" stroke="#333"/><rect x="1457.5" y="1200.5" width="13" height="13" fill="#fff" stroke="#333"/><rect x="1457.5" y="1219.5" width="13" height="13" fill="#fff" stroke="#333"/></svg>
<div class="b" style="left:843px;top:1286px;width:645px;height:1px;background:#a0a0a0;"></div>
<div class="b" style="left:853px;top:1281px;width:171px;height:12px;background:#f0f0f0;"></div>
<div class="t" style="left:857px;top:1278.5px;letter-spacing:-0.018px;font-weight:bold;">Wall stem check - front reinf.</div>
<div class="t" style="left:864px;top:1303px;letter-spacing:-0.621px;font-weight:bold;">SHEAR :</div>
<div class="t" style="left:987px;top:1303px;letter-spacing:-0.677px;color:#0f960f;font-weight:bold;">SATISFACTORY</div>
<div class="t" style="left:1099px;top:1303px;letter-spacing:-0.391px;">(0,0%)</div>
<div class="t" style="left:864px;top:1324px;letter-spacing:-0.297px;font-weight:bold;">BENDING :</div>
<div class="t" style="left:987px;top:1324px;letter-spacing:-0.677px;color:#0f960f;font-weight:bold;">SATISFACTORY</div>
<div class="t" style="left:1099px;top:1324px;letter-spacing:-0.391px;">(0,0%)</div>
<div class="t" style="left:864px;top:1345px;letter-spacing:-0.508px;font-weight:bold;">DESIGN PRINCIPLES :</div>
<div class="t" style="left:990px;top:1345px;letter-spacing:-0.729px;color:#0000e6;font-weight:bold;">NOT CHECKED</div>
<svg class="b" style="left:843px;top:1345px" width="17" height="13" viewBox="843 1345 17 13" ><rect x="845.5" y="1346.5" width="12" height="13" fill="#fff" stroke="#333"/><path d="M848 1353l3 3l5-6.5" stroke="#111" stroke-width="1.6" fill="none"/></svg>
<svg class="b" style="left:64px;top:98px" width="2369" height="967" viewBox="64 98 2369 967" ><defs><pattern id="sand" width="120" height="102" patternUnits="userSpaceOnUse"><rect width="120" height="102" fill="#ebd4ba"/><g fill="#d9a362"><path d="M57 71v3l2-1.5z"/><rect x="99" y="59" width="1" height="2"/><rect x="109" y="75" width="1" height="2"/><path d="M60 80h3l-1.5 2z"/><rect x="23" y="12" width="1" height="2"/><path d="M68 88h3l-1.5 2z"/><path d="M76 50l1.5-1.5l1.5 1.5l-1.5 1.5z" fill="none" stroke="#d9a362" stroke-width=".7"/><path d="M83 94h3l-1.5 2z"/><rect x="20" y="79" width="1" height="2"/><rect x="67" y="8" width="1" height="2"/><path d="M24 30h3l-1.5 2z"/><path d="M41 56h3l-1.5 2z"/><rect x="25" y="66" width="1" height="2"/><rect x="37" y="63" width="1" height="2"/><path d="M10 58h3l-1.5 2z"/><path d="M119 10h3l-1.5 2z"/><rect x="40" y="97" width="1" height="2"/><rect x="36" y="3" width="1" height="2"/><rect x="98" y="13" width="1" height="2"/><rect x="108" y="37" width="1" height="2"/><rect x="2" y="87" width="1" height="2"/><path d="M60 48l1.5-1.5l1.5 1.5l-1.5 1.5z" fill="none" stroke="#d9a362" stroke-width=".7"/><rect x="50" y="53" width="1" height="2"/><path d="M80 25v3l2-1.5z"/><rect x="34" y="43" width="1" height="2"/><path d="M52 97l1.5-1.5l1.5 1.5l-1.5 1.5z" fill="none" stroke="#d9a362" stroke-width=".7"/><path d="M17 31h3l-1.5 2z"/><rect x="59" y="62" width="1" height="2"/><rect x="71" y="24" width="1" height="2"/><path d="M24 93v3l2-1.5z"/><rect x="53" y="82" width="1" height="2"/><rect x="27" y="0" width="1" height="2"/><rect x="102" y="75" width="1" height="2"/><rect x="113" y="2" width="1" height="2"/><rect x="82" y="73" width="1" height="2"/><rect x="56" y="33" width="1" height="2"/><path d="M78 42v3l2-1.5z"/><rect x="49" y="9" width="1" height="2"/><path d="M26 74h3l-1.5 2z"/><rect x="1" y="76" width="1" height="2"/><rect x="79" y="58" width="1" height="2"/><rect x="17" y="49" width="1" height="2"/><path d="M19 39l1.5-1.5l1.5 1.5l-1.5 1.5z" fill="none" stroke="#d9a362" stroke-width=".7"/><rect x="31" y="92" width="1" height="2"/><path d="M94 80l1.5-1.5l1.5 1.5l-1.5 1.5z" fill="none" stroke="#d9a362" stroke-width=".7"/><path d="M49 61h3l-1.5 2z"/><rect x="13" y="13" width="1" height="2"/><path d="M32 30v3l2-1.5z"/><rect x="62" y="37" width="1" height="2"/><rect x="78" y="9" width="1" height="2"/><path d="M117 26v3l2-1.5z"/><rect x="8" y="34" width="1" height="2"/><rect x="5" y="22" width="1" height="2"/><path d="M67 73l1.5-1.5l1.5 1.5l-1.5 1.5z" fill="none" stroke="#d9a362" stroke-width=".7"/><path d="M17 57l1.5-1.5l1.5 1.5l-1.5 1.5z" fill="none" stroke="#d9a362" stroke-width=".7"/><path d="M88 66h3l-1.5 2z"/><rect x="4" y="2" width="1" height="2"/><rect x="45" y="89" width="1" height="2"/><rect x="76" y="81" width="1" height="2"/><rect x="8" y="93" width="1" height="2"/><path d="M69 47v3l2-1.5z"/><path d="M115 94v3l2-1.5z"/><path d="M16 101l1.5-1.5l1.5 1.5l-1.5 1.5z" fill="none" stroke="#d9a362" stroke-width=".7"/><rect x="43" y="45" width="1" height="2"/><path d="M60 9v3l2-1.5z"/><path d="M3 63h3l-1.5 2z"/><path d="M74 1h3l-1.5 2z"/><path d="M32 53v3l2-1.5z"/><path d="M10 66v3l2-1.5z"/><path d="M3 39h3l-1.5 2z"/><rect x="61" y="2" width="1" height="2"/><rect x="89" y="14" width="1" height="2"/><rect x="47" y="38" width="1" height="2"/><path d="M96 43h3l-1.5 2z"/><rect x="85" y="32" width="1" height="2"/><path d="M49 28h3l-1.5 2z"/><rect x="40" y="26" width="1" height="2"/><rect x="35" y="21" width="1" height="2"/><rect x="106" y="52" width="1" height="2"/><path d="M66 63h3l-1.5 2z"/><rect x="35" y="77" width="1" height="2"/><path d="M39 83v3l2-1.5z"/><rect x="58" y="24" width="1" height="2"/><rect x="13" y="80" width="1" height="2"/><path d="M91 1v3l2-1.5z"/><rect x="49" y="16" width="1" height="2"/><path d="M48 70h3l-1.5 2z"/><path d="M112 64v3l2-1.5z"/><rect x="98" y="35" width="1" height="2"/><rect x="103" y="8" width="1" height="2"/><rect x="117" y="17" width="1" height="2"/><path d="M88 56l1.5-1.5l1.5 1.5l-1.5 1.5z" fill="none" stroke="#d9a362" stroke-width=".7"/><rect x="97" y="28" width="1" height="2"/><path d="M71 37v3l2-1.5z"/><path d="M85 48l1.5-1.5l1.5 1.5l-1.5 1.5z" fill="none" stroke="#d9a362" stroke-width=".7"/><path d="M26 38v3l2-1.5z"/><rect x="117" y="51" width="1" height="2"/><rect x="13" y="24" width="1" height="2"/><path d="M16 89v3l2-1.5z"/><rect x="24" y="19" width="1" height="2"/><path d="M105 67h3l-1.5 2z"/><rect x="68" y="81" width="1" height="2"/><rect x="109" y="17" width="1" height="2"/><path d="M103 44l1.5-1.5l1.5 1.5l-1.5 1.5z" fill="none" stroke="#d9a362" stroke-width=".7"/><path d="M25 51h3l-1.5 2z"/><path d="M106 24v3l2-1.5z"/><path d="M97 70h3l-1.5 2z"/><rect x="12" y="41" width="1" height="2"/><path d="M47 1h3l-1.5 2z"/><rect x="101" y="1" width="1" height="2"/><path d="M95 95v3l2-1.5z"/><rect x="92" y="23" width="1" height="2"/><rect x="27" y="84" width="1" height="2"/><rect x="9" y="49" width="1" height="2"/><path d="M115 43h3l-1.5 2z"/><path d="M65 53l1.5-1.5l1.5 1.5l-1.5 1.5z" fill="none" stroke="#d9a362" stroke-width=".7"/><rect x="103" y="82" width="1" height="2"/><rect x="95" y="50" width="1" height="2"/><rect x="77" y="90" width="1" height="2"/><rect x="89" y="75" width="1" height="2"/><rect x="112" y="87" width="1" height="2"/><path d="M54 3h3l-1.5 2z"/><path d="M107 98v3l2-1.5z"/><path d="M70 97v3l2-1.5z"/><rect x="97" y="88" width="1" height="2"/><rect x="116" y="35" width="1" height="2"/><rect x="31" y="10" width="1" height="2"/><rect x="8" y="74" width="1" height="2"/></g></pattern><pattern id="clay" width="45.8" height="34.2" patternUnits="userSpaceOnUse"><rect width="45.8" height="34.2" fill="#ccaadc"/><path d="M-18.4 31.3h15.8" stroke="#9a4fbc" stroke-width="1"/><path d="M27.4 31.3h15.8" stroke="#9a4fbc" stroke-width="1"/><path d="M73.2 31.3h15.8" stroke="#9a4fbc" stroke-width="1"/><path d="M-33.67 8.5h15.8" stroke="#9a4fbc" stroke-width="1"/><path d="M12.13 8.5h15.8" stroke="#9a4fbc" stroke-width="1"/><path d="M57.93 8.5h15.8" stroke="#9a4fbc" stroke-width="1"/><path d="M-3.14 19.9h15.8" stroke="#9a4fbc" stroke-width="1"/><path d="M42.66 19.9h15.8" stroke="#9a4fbc" stroke-width="1"/><path d="M88.46 19.9h15.8" stroke="#9a4fbc" stroke-width="1"/><circle cx="8" cy="7" r="2.3" fill="none" stroke="#9a4fbc" stroke-width=".9"/><circle cx="30" cy="18.5" r="2.3" fill="none" stroke="#9a4fbc" stroke-width=".9"/><circle cx="20" cy="30" r="2.3" fill="none" stroke="#9a4fbc" stroke-width=".9"/><circle cx="41" cy="3" r="2.3" fill="none" stroke="#9a4fbc" stroke-width=".9"/></pattern><pattern id="yel" width="32" height="27" patternUnits="userSpaceOnUse"><rect width="32" height="27" fill="#f9f8c6"/><g stroke="#eeee86" stroke-width=".9" fill="none"><path d="M-2 29l12-12M14 13l12-12M16 29l12-12M30 13l4-4M-2 13l10-10"/><circle cx="12" cy="15" r="2.3"/><circle cx="28" cy="2" r="2.3"/></g></pattern><pattern id="hr" width="7.8" height="7.8" patternUnits="userSpaceOnUse" patternTransform="rotate(-30 1787 837)"><path d="M0 .5h7.8M.5 0v7.8" stroke="#ff0000" stroke-width="1"/></pattern><pattern id="hb" width="7.8" height="7.8" patternUnits="userSpaceOnUse" patternTransform="rotate(-30 2148 837)"><path d="M0 .5h7.8M.5 0v7.8" stroke="#000080" stroke-width="1"/></pattern></defs><g shape-rendering="crispEdges"><polygon points="840.7,352 1035,352 1229,255 1620,255 1131.4,837.4 889.3,837.4" fill="url(#sand)"/><polygon points="1620.5,255.5 1620.5,741.5 1212.5,741.5" fill="url(#yel)"/><clipPath id="cp1"><polygon points="1212.5,741.5 1620.5,741.5 1620.5,1021.5 1131.5,1021.5 1131.5,837.5"/></clipPath><polygon points="1212.5,741.5 1620.5,741.5 1620.5,1021.5 1131.5,1021.5 1131.5,837.5" fill="#ccaadc"/><g clip-path="url(#cp1)"><path d="M1157 726.5h16M1203 726.5h16M1249 726.5h16M1295 726.5h16M1340 726.5h16M1386 726.5h16M1432 726.5h16M1478 726.5h16M1524 726.5h16M1569 726.5h16M1615 726.5h16M1142 738.5h16M1188 738.5h16M1233 738.5h16M1279 738.5h16M1325 738.5h16M1371 738.5h16M1417 738.5h16M1462 738.5h16M1508 738.5h16M1554 738.5h16M1600 738.5h16M1127 749.5h16M1172 749.5h16M1218 749.5h16M1264 749.5h16M1310 749.5h16M1356 749.5h16M1401 749.5h16M1447 749.5h16M1493 749.5h16M1539 749.5h16M1585 749.5h16M1157 760.5h16M1203 760.5h16M1249 760.5h16M1295 760.5h16M1340 760.5h16M1386 760.5h16M1432 760.5h16M1478 760.5h16M1524 760.5h16M1569 760.5h16M1615 760.5h16M1142 772.5h16M1188 772.5h16M1233 772.5h16M1279 772.5h16M1325 772.5h16M1371 772.5h16M1417 772.5h16M1462 772.5h16M1508 772.5h16M1554 772.5h16M1600 772.5h16M1127 783.5h16M1172 783.5h16M1218 783.5h16M1264 783.5h16M1310 783.5h16M1356 783.5h16M1401 783.5h16M1447 783.5h16M1493 783.5h16M1539 783.5h16M1585 783.5h16M1157 795.5h16M1203 795.5h16M1249 795.5h16M1295 795.5h16M1340 795.5h16M1386 795.5h16M1432 795.5h16M1478 795.5h16M1524 795.5h16M1569 795.5h16M1615 795.5h16M1142 806.5h16M1188 806.5h16M1233 806.5h16M1279 806.5h16M1325 806.5h16M1371 806.5h16M1417 806.5h16M1462 806.5h16M1508 806.5h16M1554 806.5h16M1600 806.5h16M1127 817.5h16M1172 817.5h16M1218 817.5h16M1264 817.5h16M1310 817.5h16M1356 817.5h16M1401 817.5h16M1447 817.5h16M1493 817.5h16M1539 817.5h16M1585 817.5h16M1157 829.5h16M1203 829.5h16M1249 829.5h16M1295 829.5h16M1340 829.5h16M1386 829.5h16M1432 829.5h16M1478 829.5h16M1524 829.5h16M1569 829.5h16M1615 829.5h16M1142 840.5h16M1188 840.5h16M1233 840.5h16M1279 840.5h16M1325 840.5h16M1371 840.5h16M1417 840.5h16M1462 840.5h16M1508 840.5h16M1554 840.5h16M1600 840.5h16M1127 852.5h16M1172 852.5h16M1218 852.5h16M1264 852.5h16M1310 852.5h16M1356 852.5h16M1401 852.5h16M1447 852.5h16M1493 852.5h16M1539 852.5h16M1585 852.5h16M1157 863.5h16M1203 863.5h16M1249 863.5h16M1294 863.5h16M1340 863.5h16M1386 863.5h16M1432 863.5h16M1478 863.5h16M1523 863.5h16M1569 863.5h16M1615 863.5h16M1142 874.5h16M1188 874.5h16M1233 874.5h16M1279 874.5h16M1325 874.5h16M1371 874.5h16M1417 874.5h16M1462 874.5h16M1508 874.5h16M1554 874.5h16M1600 874.5h16M1127 886.5h16M1172 886.5h16M1218 886.5h16M1264 886.5h16M1310 886.5h16M1356 886.5h16M1401 886.5h16M1447 886.5h16M1493 886.5h16M1539 886.5h16M1585 886.5h16M1157 897.5h16M1203 897.5h16M1249 897.5h16M1294 897.5h16M1340 897.5h16M1386 897.5h16M1432 897.5h16M1478 897.5h16M1523 897.5h16M1569 897.5h16M1615 897.5h16M1142 909.5h16M1188 909.5h16M1233 909.5h16M1279 909.5h16M1325 909.5h16M1371 909.5h16M1417 909.5h16M1462 909.5h16M1508 909.5h16M1554 909.5h16M1600 909.5h16M1127 920.5h16M1172 920.5h16M1218 920.5h16M1264 920.5h16M1310 920.5h16M1356 920.5h16M1401 920.5h16M1447 920.5h16M1493 920.5h16M1539 920.5h16M1585 920.5h16M1157 931.5h16M1203 931.5h16M1249 931.5h16M1294 931.5h16M1340 931.5h16M1386 931.5h16M1432 931.5h16M1478 931.5h16M1523 931.5h16M1569 931.5h16M1615 931.5h16M1142 943.5h16M1188 943.5h16M1233 943.5h16M1279 943.5h16M1325 943.5h16M1371 943.5h16M1417 943.5h16M1462 943.5h16M1508 943.5h16M1554 943.5h16M1600 943.5h16M1127 954.5h16M1172 954.5h16M1218 954.5h16M1264 954.5h16M1310 954.5h16M1356 954.5h16M1401 954.5h16M1447 954.5h16M1493 954.5h16M1539 954.5h16M1585 954.5h16M1157 966.5h16M1203 966.5h16M1249 966.5h16M1294 966.5h16M1340 966.5h16M1386 966.5h16M1432 966.5h16M1478 966.5h16M1523 966.5h16M1569 966.5h16M1615 966.5h16M1142 977.5h16M1188 977.5h16M1233 977.5h16M1279 977.5h16M1325 977.5h16M1371 977.5h16M1417 977.5h16M1462 977.5h16M1508 977.5h16M1554 977.5h16M1600 977.5h16M1127 988.5h16M1172 988.5h16M1218 988.5h16M1264 988.5h16M1310 988.5h16M1356 988.5h16M1401 988.5h16M1447 988.5h16M1493 988.5h16M1539 988.5h16M1585 988.5h16M1157 1000.5h16M1203 1000.5h16M1249 1000.5h16M1294 1000.5h16M1340 1000.5h16M1386 1000.5h16M1432 1000.5h16M1478 1000.5h16M1523 1000.5h16M1569 1000.5h16M1615 1000.5h16M1142 1011.5h16M1188 1011.5h16M1233 1011.5h16M1279 1011.5h16M1325 1011.5h16M1371 1011.5h16M1417 1011.5h16M1462 1011.5h16M1508 1011.5h16M1554 1011.5h16M1600 1011.5h16M1127 1023.5h16M1172 1023.5h16M1218 1023.5h16M1264 1023.5h16M1310 1023.5h16M1356 1023.5h16M1401 1023.5h16M1447 1023.5h16M1493 1023.5h16M1539 1023.5h16M1585 1023.5h16" stroke="#9a4fbc" stroke-width="1" fill="none"/><g fill="none" stroke="#9a4fbc" stroke-width="1" shape-rendering="auto"><path d="M1143.5 759.5l3-2.5l3 2.5l-3 2.5z"/><path d="M1184.5 758.5l3-2.5l3 2.5l-3 2.5z"/><path d="M1194.5 752.5l3-2.5l3 2.5l-3 2.5z"/><circle cx="1245.5" cy="763.5" r="2.5"/><circle cx="1274.5" cy="746.5" r="2.5"/><circle cx="1309.5" cy="740.5" r="2.5"/><path d="M1332.5 763.5l3-2.5l3 2.5l-3 2.5z"/><circle cx="1365.5" cy="760.5" r="2.5"/><circle cx="1409.5" cy="743.5" r="2.5"/><circle cx="1449.5" cy="745.5" r="2.5"/><circle cx="1485.5" cy="762.5" r="2.5"/><circle cx="1517.5" cy="753.5" r="2.5"/><path d="M1528.5 764.5l3-2.5l3 2.5l-3 2.5z"/><circle cx="1583.5" cy="762.5" r="2.5"/><circle cx="1601.5" cy="744.5" r="2.5"/><circle cx="1143.5" cy="781.5" r="2.5"/><circle cx="1174.5" cy="790.5" r="2.5"/><circle cx="1215.5" cy="793.5" r="2.5"/><path d="M1245.5 785.5l3-2.5l3 2.5l-3 2.5z"/><circle cx="1274.5" cy="797.5" r="2.5"/><circle cx="1325.5" cy="794.5" r="2.5"/><circle cx="1359.5" cy="782.5" r="2.5"/><circle cx="1372.5" cy="774.5" r="2.5"/><path d="M1426.5 778.5l3-2.5l3 2.5l-3 2.5z"/><circle cx="1461.5" cy="797.5" r="2.5"/><path d="M1477.5 786.5l3-2.5l3 2.5l-3 2.5z"/><path d="M1504.5 792.5l3-2.5l3 2.5l-3 2.5z"/><path d="M1555.5 774.5l3-2.5l3 2.5l-3 2.5z"/><circle cx="1572.5" cy="782.5" r="2.5"/><path d="M1623.5 781.5l3-2.5l3 2.5l-3 2.5z"/><circle cx="1166.5" cy="814.5" r="2.5"/><circle cx="1189.5" cy="808.5" r="2.5"/><circle cx="1235.5" cy="831.5" r="2.5"/><circle cx="1252.5" cy="831.5" r="2.5"/><circle cx="1294.5" cy="812.5" r="2.5"/><circle cx="1338.5" cy="817.5" r="2.5"/><circle cx="1351.5" cy="829.5" r="2.5"/><circle cx="1395.5" cy="827.5" r="2.5"/><circle cx="1434.5" cy="830.5" r="2.5"/><circle cx="1469.5" cy="809.5" r="2.5"/><circle cx="1486.5" cy="827.5" r="2.5"/><path d="M1523.5 831.5l3-2.5l3 2.5l-3 2.5z"/><circle cx="1572.5" cy="817.5" r="2.5"/><circle cx="1599.5" cy="818.5" r="2.5"/><circle cx="1624.5" cy="810.5" r="2.5"/><circle cx="1155.5" cy="863.5" r="2.5"/><circle cx="1175.5" cy="847.5" r="2.5"/><path d="M1200.5 859.5l3-2.5l3 2.5l-3 2.5z"/><path d="M1235.5 859.5l3-2.5l3 2.5l-3 2.5z"/><path d="M1276.5 856.5l3-2.5l3 2.5l-3 2.5z"/><circle cx="1304.5" cy="857.5" r="2.5"/><path d="M1337.5 858.5l3-2.5l3 2.5l-3 2.5z"/><circle cx="1368.5" cy="863.5" r="2.5"/><circle cx="1409.5" cy="839.5" r="2.5"/><circle cx="1433.5" cy="856.5" r="2.5"/><path d="M1477.5 855.5l3-2.5l3 2.5l-3 2.5z"/><path d="M1499.5 855.5l3-2.5l3 2.5l-3 2.5z"/><path d="M1544.5 848.5l3-2.5l3 2.5l-3 2.5z"/><path d="M1578.5 856.5l3-2.5l3 2.5l-3 2.5z"/><circle cx="1616.5" cy="852.5" r="2.5"/><path d="M1142.5 893.5l3-2.5l3 2.5l-3 2.5z"/><path d="M1183.5 889.5l3-2.5l3 2.5l-3 2.5z"/><path d="M1222.5 876.5l3-2.5l3 2.5l-3 2.5z"/><circle cx="1255.5" cy="889.5" r="2.5"/><circle cx="1289.5" cy="891.5" r="2.5"/><circle cx="1324.5" cy="873.5" r="2.5"/><circle cx="1350.5" cy="888.5" r="2.5"/><circle cx="1389.5" cy="888.5" r="2.5"/><circle cx="1417.5" cy="878.5" r="2.5"/><circle cx="1441.5" cy="880.5" r="2.5"/><circle cx="1476.5" cy="873.5" r="2.5"/><circle cx="1514.5" cy="887.5" r="2.5"/><circle cx="1543.5" cy="895.5" r="2.5"/><circle cx="1580.5" cy="879.5" r="2.5"/><circle cx="1606.5" cy="893.5" r="2.5"/><circle cx="1153.5" cy="920.5" r="2.5"/><circle cx="1199.5" cy="913.5" r="2.5"/><circle cx="1242.5" cy="925.5" r="2.5"/><circle cx="1271.5" cy="921.5" r="2.5"/><circle cx="1288.5" cy="920.5" r="2.5"/><circle cx="1341.5" cy="929.5" r="2.5"/><circle cx="1359.5" cy="927.5" r="2.5"/><circle cx="1386.5" cy="919.5" r="2.5"/><path d="M1417.5 921.5l3-2.5l3 2.5l-3 2.5z"/><circle cx="1458.5" cy="916.5" r="2.5"/><circle cx="1489.5" cy="929.5" r="2.5"/><circle cx="1539.5" cy="928.5" r="2.5"/><circle cx="1554.5" cy="930.5" r="2.5"/><path d="M1588.5 913.5l3-2.5l3 2.5l-3 2.5z"/><circle cx="1626.5" cy="912.5" r="2.5"/><circle cx="1133.5" cy="954.5" r="2.5"/><path d="M1167.5 958.5l3-2.5l3 2.5l-3 2.5z"/><circle cx="1196.5" cy="951.5" r="2.5"/><circle cx="1252.5" cy="958.5" r="2.5"/><path d="M1266.5 942.5l3-2.5l3 2.5l-3 2.5z"/><circle cx="1302.5" cy="953.5" r="2.5"/><path d="M1341.5 953.5l3-2.5l3 2.5l-3 2.5z"/><circle cx="1364.5" cy="957.5" r="2.5"/><circle cx="1407.5" cy="946.5" r="2.5"/><circle cx="1440.5" cy="950.5" r="2.5"/><circle cx="1479.5" cy="953.5" r="2.5"/><path d="M1496.5 949.5l3-2.5l3 2.5l-3 2.5z"/><circle cx="1548.5" cy="952.5" r="2.5"/><circle cx="1578.5" cy="949.5" r="2.5"/><circle cx="1610.5" cy="954.5" r="2.5"/><circle cx="1164.5" cy="981.5" r="2.5"/><circle cx="1195.5" cy="976.5" r="2.5"/><path d="M1225.5 973.5l3-2.5l3 2.5l-3 2.5z"/><circle cx="1257.5" cy="982.5" r="2.5"/><circle cx="1293.5" cy="994.5" r="2.5"/><circle cx="1318.5" cy="985.5" r="2.5"/><circle cx="1347.5" cy="975.5" r="2.5"/><circle cx="1392.5" cy="973.5" r="2.5"/><circle cx="1425.5" cy="991.5" r="2.5"/><path d="M1436.5 989.5l3-2.5l3 2.5l-3 2.5z"/><circle cx="1496.5" cy="989.5" r="2.5"/><circle cx="1525.5" cy="976.5" r="2.5"/><circle cx="1561.5" cy="989.5" r="2.5"/><circle cx="1577.5" cy="994.5" r="2.5"/><circle cx="1618.5" cy="981.5" r="2.5"/><circle cx="1168.5" cy="1005.5" r="2.5"/><circle cx="1194.5" cy="1006.5" r="2.5"/><path d="M1229.5 1023.5l3-2.5l3 2.5l-3 2.5z"/><circle cx="1254.5" cy="1015.5" r="2.5"/><path d="M1296.5 1016.5l3-2.5l3 2.5l-3 2.5z"/><path d="M1323.5 1005.5l3-2.5l3 2.5l-3 2.5z"/><circle cx="1354.5" cy="1020.5" r="2.5"/><circle cx="1406.5" cy="1018.5" r="2.5"/><circle cx="1423.5" cy="1018.5" r="2.5"/><circle cx="1468.5" cy="1017.5" r="2.5"/><path d="M1485.5 1013.5l3-2.5l3 2.5l-3 2.5z"/><circle cx="1519.5" cy="1022.5" r="2.5"/><circle cx="1550.5" cy="1021.5" r="2.5"/><circle cx="1584.5" cy="1019.5" r="2.5"/><circle cx="1636.5" cy="1016.5" r="2.5"/></g></g><polygon points="1212.5,741.5 1620.5,741.5 1620.5,1021.5 1131.5,1021.5 1131.5,837.5" fill="none" stroke="#7b3f7b" stroke-width="1"/><clipPath id="cp2"><polygon points="200.5,837.5 371.5,837.5 371.5,895.5 200.5,895.5"/></clipPath><polygon points="200.5,837.5 371.5,837.5 371.5,895.5 200.5,895.5" fill="#ccaadc"/><g clip-path="url(#cp2)"><path d="M220 817.5h16M266 817.5h16M312 817.5h16M358 817.5h16M205 829.5h16M251 829.5h16M297 829.5h16M342 829.5h16M190 840.5h16M235 840.5h16M281 840.5h16M327 840.5h16M373 840.5h16M220 852.5h16M266 852.5h16M312 852.5h16M358 852.5h16M205 863.5h16M251 863.5h16M296 863.5h16M342 863.5h16M190 874.5h16M235 874.5h16M281 874.5h16M327 874.5h16M373 874.5h16M220 886.5h16M266 886.5h16M312 886.5h16M358 886.5h16M205 897.5h16M251 897.5h16M296 897.5h16M342 897.5h16" stroke="#9a4fbc" stroke-width="1" fill="none"/><g fill="none" stroke="#9a4fbc" stroke-width="1" shape-rendering="auto"><circle cx="211.5" cy="845.5" r="2.5"/><circle cx="254.5" cy="836.5" r="2.5"/><circle cx="287.5" cy="838.5" r="2.5"/><circle cx="313.5" cy="837.5" r="2.5"/><path d="M346.5 847.5l3-2.5l3 2.5l-3 2.5z"/><circle cx="368.5" cy="842.5" r="2.5"/><circle cx="223.5" cy="892.5" r="2.5"/><path d="M259.5 879.5l3-2.5l3 2.5l-3 2.5z"/><circle cx="279.5" cy="876.5" r="2.5"/><circle cx="327.5" cy="880.5" r="2.5"/><circle cx="349.5" cy="874.5" r="2.5"/><path d="M392.5 874.5l3-2.5l3 2.5l-3 2.5z"/></g></g><polygon points="200.5,837.5 371.5,837.5 371.5,895.5 200.5,895.5" fill="none" stroke="#7b3f7b" stroke-width="1"/><path d="M1620.5 255.5L1131.5 837.5M1212.5 741.5H1620.5M1620.5 255.5V1021.5M889.3 837.5H1131.5" fill="none" stroke="#7b3f7b" stroke-width="1"/><polyline points="72,934 414,934 511,837 704,837" fill="none" stroke="#7b3f7b" stroke-width="2"/><polyline points="840.7,352 1035,352 1229,255 1846,255" fill="none" stroke="#7b3f7b" stroke-width="2"/><polygon points="704.5,837.5 801.5,837.5 801.5,352.5 840.7,352.5 889.3,837.5 1131.5,837.5 1131.5,924.5 1083.5,924.5 1083.5,895.5 704.5,895.5" fill="#fff" stroke="#7b3f7b" stroke-width="1"/><path d="M807 357v500.5" stroke="#008000" stroke-width="4"/><path d="M835.7 357L889.3 891.4" stroke="#00ffff" stroke-width="2"/><path d="M707.5 841h421.5M707.5 891.7h421.5" stroke="#00ffff" stroke-width="2"/><path d="M801.5 837.5h55M801.5 837.5v53.5" stroke="#ff0000" fill="none"/><path d="M848.5 834.5l8 3l-8 3M798.5 883l3 8l3-8" stroke="#ff0000" fill="none"/><path d="M650.5 352v543.5M647.5 352.5h52M647.5 895.5h52M704.5 901.5v52.5M1131.5 924.5v29.5M701.5 951h433" stroke="#3c3c3c" fill="none"/><path d="M646.5 348.5l8 8M646.5 891.5l8 8M700.5 955l8-8M1127.5 955l8-8" stroke="#3c3c3c" fill="none"/><path d="M1228.5 141.5h485.5M1228.5 141.5V254M1218.7 228L1228.5 254L1238.3 228M1257 141.5V254M1247.2 228L1257 254L1266.8 228M1285.6 141.5V254M1275.8 228L1285.6 254L1295.4 228M1314.2 141.5V254M1304.4 228L1314.2 254L1324 228M1342.7 141.5V254M1332.9 228L1342.7 254L1352.5 228M1371.2 141.5V254M1361.5 228L1371.2 254L1381 228M1399.8 141.5V254M1390 228L1399.8 254L1409.6 228M1428.3 141.5V254M1418.5 228L1428.3 254L1438.1 228M1456.9 141.5V254M1447.1 228L1456.9 254L1466.7 228M1485.5 141.5V254M1475.7 228L1485.5 254L1495.2 228M1514 141.5V254M1504.2 228L1514 254L1523.8 228M1542.5 141.5V254M1532.8 228L1542.5 254L1552.3 228M1571.1 141.5V254M1561.3 228L1571.1 254L1580.9 228M1599.7 141.5V254M1589.9 228L1599.7 254L1609.5 228M1628.2 141.5V254M1618.4 228L1628.2 254L1638 228M1656.8 141.5V254M1647 228L1656.8 254L1666.5 228M1685.3 141.5V254M1675.5 228L1685.3 254L1695.1 228M1713.8 141.5V254M1704 228L1713.8 254L1723.6 228" stroke="#3f5f8f" fill="none"/><path d="M835.2 542.5V626" stroke="#000080" stroke-width="2"/><path d="M826.4 606L835.2 626.7L843.6 606" stroke="#000080" stroke-width="2" fill="none"/><path d="M903 594.5L865.4 601M880 592.5L865.4 601L881 604.5" stroke="#000080" fill="none"/><path d="M985.6 664.4L873.7 687M899 672L873.7 687L902 691.5" stroke="#000080" fill="none"/><path d="M861.6 624.2L916 571H1075" stroke="#000080" fill="none"/><path d="M613 799.5H772L812.6 841" stroke="#000080" fill="none"/><path d="M918 891.4L960 934.5H1119" stroke="#000080" fill="none"/><path d="M757.5 557.5L806 605" stroke="#008000" fill="none"/><circle cx="861.6" cy="624.2" r="1.5" fill="#000080"/><circle cx="812.6" cy="841" r="1.5" fill="#000080"/><circle cx="918" cy="891.4" r="1.5" fill="#000080"/><circle cx="806.5" cy="605" r="1.5" fill="#008000"/><rect x="599" y="544" width="158" height="14.5" fill="#dfeedd"/><rect x="597.5" y="542.5" width="162" height="18" fill="none" stroke="#222" stroke-dasharray="3 2"/><rect x="914.5" y="555.5" width="162" height="18.5" fill="none" stroke="#222" stroke-dasharray="3 2"/><rect x="611.5" y="783.5" width="162" height="18.5" fill="none" stroke="#222" stroke-dasharray="3 2"/><rect x="958.5" y="918.5" width="162" height="18.5" fill="none" stroke="#222" stroke-dasharray="3 2"/><polygon points="1787.5,352.5 1875.6,352.5 1897.5,440.6 1924.3,550 1947.5,640.4 1966,720.9 1985.1,801.3 1993.6,837.5 1787.5,837.5" fill="#ffbfbf" stroke="#ff0000"/><polygon points="1787.5,837.5 1787.5,352.5 1787.5,358.6 1787.5,364.6 1787.5,370.7 1787.6,376.8 1787.6,382.8 1787.7,388.9 1787.8,394.9 1788,401 1788.1,407.1 1788.3,413.1 1788.6,419.2 1788.9,425.2 1789.2,431.3 1789.6,437.4 1790,443.4 1790.5,449.5 1791,455.6 1791.6,461.6 1792.3,467.7 1793,473.8 1793.8,479.8 1794.6,485.9 1795.6,491.9 1796.5,498 1797.6,504.1 1798.7,510.1 1800,516.2 1801.3,522.2 1802.6,528.3 1804.1,534.4 1805.6,540.4 1807.3,546.5 1809,552.6 1810.8,558.6 1812.7,564.7 1814.7,570.8 1816.8,576.8 1819.1,582.9 1821.4,588.9 1823.8,595 1826.3,601.1 1828.9,607.1 1831.7,613.2 1834.5,619.2 1837.5,625.3 1840.6,631.4 1843.8,637.4 1847.1,643.5 1850.5,649.6 1854.1,655.6 1857.8,661.7 1861.6,667.8 1865.5,673.8 1869.6,679.9 1873.8,685.9 1878.1,692 1882.6,698.1 1887.2,704.1 1891.9,710.2 1896.8,716.2 1901.8,722.3 1907,728.4 1912.3,734.4 1917.8,740.5 1923.4,746.6 1929.2,752.6 1935.1,758.7 1941.1,764.8 1947.4,770.8 1953.7,776.9 1960.3,782.9 1967,789 1973.8,795.1 1980.9,801.1 1988.1,807.2 1995.4,813.2 2002.9,819.3 2010.6,825.4 2018.5,831.4 2026.5,837.5" fill="#ff6060" fill-opacity=".5"/><polygon points="1787.5,837.5 1787.5,352.5 1787.5,358.6 1787.5,364.6 1787.5,370.7 1787.6,376.8 1787.6,382.8 1787.7,388.9 1787.8,394.9 1788,401 1788.1,407.1 1788.3,413.1 1788.6,419.2 1788.9,425.2 1789.2,431.3 1789.6,437.4 1790,443.4 1790.5,449.5 1791,455.6 1791.6,461.6 1792.3,467.7 1793,473.8 1793.8,479.8 1794.6,485.9 1795.6,491.9 1796.5,498 1797.6,504.1 1798.7,510.1 1800,516.2 1801.3,522.2 1802.6,528.3 1804.1,534.4 1805.6,540.4 1807.3,546.5 1809,552.6 1810.8,558.6 1812.7,564.7 1814.7,570.8 1816.8,576.8 1819.1,582.9 1821.4,588.9 1823.8,595 1826.3,601.1 1828.9,607.1 1831.7,613.2 1834.5,619.2 1837.5,625.3 1840.6,631.4 1843.8,637.4 1847.1,643.5 1850.5,649.6 1854.1,655.6 1857.8,661.7 1861.6,667.8 1865.5,673.8 1869.6,679.9 1873.8,685.9 1878.1,692 1882.6,698.1 1887.2,704.1 1891.9,710.2 1896.8,716.2 1901.8,722.3 1907,728.4 1912.3,734.4 1917.8,740.5 1923.4,746.6 1929.2,752.6 1935.1,758.7 1941.1,764.8 1947.4,770.8 1953.7,776.9 1960.3,782.9 1967,789 1973.8,795.1 1980.9,801.1 1988.1,807.2 1995.4,813.2 2002.9,819.3 2010.6,825.4 2018.5,831.4 2026.5,837.5" fill="url(#hr)" stroke="#ff0000"/><path d="M1783.5 352.5H1879.6M1787.5 349v7M1875.6 349v7" stroke="#ff0000" fill="none"/><path d="M1787.5 837.5H2030.55M1993.6 833v9M2026.55 833v9" stroke="#ff0000" fill="none"/><path d="M1787.5 849.5H2030.5M1787.5 841V849.5M1799.7 845V853M1811.8 845V853M1824 845V853M1836.1 845V853M1848.2 841V857M1860.4 845V853M1872.5 845V853M1884.7 845V853M1896.8 845V853M1909 841V857M1921.2 845V853M1933.3 845V853M1945.5 845V853M1957.6 845V853M1969.8 841V857M1981.9 845V853M1994 845V853M2006.2 845V853M2018.3 845V853M2030.5 841V849.5" stroke="#ff0000" fill="none"/><polygon points="2148.5,352.5 2273.7,352.5 2291.2,420.4 2309.3,500.9 2328,580 2333.2,600 2347,653.9 2359.2,707.7 2370.6,761.6 2380.8,815.4 2386.3,837.5 2148.5,837.5" fill="#bfbfdf" stroke="#000080"/><polygon points="2148.5,837.5 2148.5,352.5 2148.6,358.6 2148.8,364.6 2149,370.7 2149.3,376.8 2149.7,382.8 2150.2,388.9 2150.7,394.9 2151.3,401 2151.9,407.1 2152.6,413.1 2153.3,419.2 2154,425.2 2154.9,431.3 2155.7,437.4 2156.6,443.4 2157.6,449.5 2158.6,455.6 2159.6,461.6 2160.7,467.7 2161.8,473.8 2163,479.8 2164.2,485.9 2165.5,491.9 2166.8,498 2168.1,504.1 2169.5,510.1 2170.9,516.2 2172.3,522.2 2173.8,528.3 2175.3,534.4 2176.9,540.4 2178.4,546.5 2180.1,552.6 2181.7,558.6 2183.4,564.7 2185.2,570.8 2186.9,576.8 2188.7,582.9 2190.6,588.9 2192.5,595 2194.4,601.1 2196.3,607.1 2198.3,613.2 2200.3,619.2 2202.3,625.3 2204.4,631.4 2206.5,637.4 2208.7,643.5 2210.8,649.6 2213,655.6 2215.3,661.7 2217.5,667.8 2219.8,673.8 2222.2,679.9 2224.5,685.9 2226.9,692 2229.3,698.1 2231.8,704.1 2234.3,710.2 2236.8,716.2 2239.3,722.3 2241.9,728.4 2244.5,734.4 2247.2,740.5 2249.8,746.6 2252.5,752.6 2255.3,758.7 2258,764.8 2260.8,770.8 2263.6,776.9 2266.5,782.9 2269.3,789 2272.2,795.1 2275.2,801.1 2278.1,807.2 2281.1,813.2 2284.1,819.3 2287.2,825.4 2290.2,831.4 2293.3,837.5" fill="#6060b0" fill-opacity=".5"/><polygon points="2148.5,837.5 2148.5,352.5 2148.6,358.6 2148.8,364.6 2149,370.7 2149.3,376.8 2149.7,382.8 2150.2,388.9 2150.7,394.9 2151.3,401 2151.9,407.1 2152.6,413.1 2153.3,419.2 2154,425.2 2154.9,431.3 2155.7,437.4 2156.6,443.4 2157.6,449.5 2158.6,455.6 2159.6,461.6 2160.7,467.7 2161.8,473.8 2163,479.8 2164.2,485.9 2165.5,491.9 2166.8,498 2168.1,504.1 2169.5,510.1 2170.9,516.2 2172.3,522.2 2173.8,528.3 2175.3,534.4 2176.9,540.4 2178.4,546.5 2180.1,552.6 2181.7,558.6 2183.4,564.7 2185.2,570.8 2186.9,576.8 2188.7,582.9 2190.6,588.9 2192.5,595 2194.4,601.1 2196.3,607.1 2198.3,613.2 2200.3,619.2 2202.3,625.3 2204.4,631.4 2206.5,637.4 2208.7,643.5 2210.8,649.6 2213,655.6 2215.3,661.7 2217.5,667.8 2219.8,673.8 2222.2,679.9 2224.5,685.9 2226.9,692 2229.3,698.1 2231.8,704.1 2234.3,710.2 2236.8,716.2 2239.3,722.3 2241.9,728.4 2244.5,734.4 2247.2,740.5 2249.8,746.6 2252.5,752.6 2255.3,758.7 2258,764.8 2260.8,770.8 2263.6,776.9 2266.5,782.9 2269.3,789 2272.2,795.1 2275.2,801.1 2278.1,807.2 2281.1,813.2 2284.1,819.3 2287.2,825.4 2290.2,831.4 2293.3,837.5" fill="url(#hb)" stroke="#000080"/><path d="M2144.5 352.5H2277.7M2148.5 349v7M2273.7 349v7" stroke="#000080" fill="none"/><path d="M2148.5 837.5H2390.3M2386.3 833v9M2293.33 833v9" stroke="#000080" fill="none"/><path d="M2148.5 849.5H2391.5M2148.5 841V849.5M2160.7 845V853M2172.8 845V853M2184.9 845V853M2197.1 845V853M2209.2 841V857M2221.4 845V853M2233.6 845V853M2245.7 845V853M2257.8 845V853M2270 841V857M2282.2 845V853M2294.3 845V853M2306.4 845V853M2318.6 845V853M2330.8 841V857M2342.9 845V853M2355.1 845V853M2367.2 845V853M2379.3 845V853M2391.5 841V849.5" stroke="#000080" fill="none"/></g></svg>
<div class="t" style="left:599.5px;top:543.5px;letter-spacing:-0.112px;color:#008000;">6 prof. 12,0mm,cover 50,0mm</div>
<div class="t" style="left:916.6px;top:556.5px;letter-spacing:-0.123px;color:#000080;">6 prof. 12,0mm,cover 50,0mm</div>
<div class="t" style="left:613.6px;top:784.5px;letter-spacing:-0.123px;color:#000080;">8 prof. 20,0mm,cover 30,0mm</div>
<div class="t" style="left:960.6px;top:919.5px;letter-spacing:-0.123px;color:#000080;">6 prof. 16,0mm,cover 30,0mm</div>
<div class="t" style="left:822px;top:526.5px;letter-spacing:-0.603px;color:#2828ff;">77,97</div>
<div class="t" style="left:903px;top:578.5px;letter-spacing:-0.803px;color:#2828ff;">14,21</div>
<div class="t" style="left:986px;top:648.5px;letter-spacing:-0.781px;color:#2828ff;">120,85</div>
<div class="t" style="left:637px;top:609px;letter-spacing:0.164px;color:#3c3c3c;">5,60</div>
<div class="t" style="left:904.5px;top:934.5px;letter-spacing:0.414px;color:#3c3c3c;">4,40</div>
<div class="t" style="left:858px;top:828.5px;color:#ff0000;font-size:11px;">+x</div>
<div class="t" style="left:795px;top:894px;color:#ff0000;font-size:11px;">+z</div>
<div class="t" style="left:1738px;top:277px;letter-spacing:-0.07px;color:#ff0000;font-weight:bold;">Bending moment</div>
<div class="t" style="left:1723px;top:291.5px;letter-spacing:-0.184px;color:#ff0000;">Max M<sub>Rd2</sub> = 256,21 kNm</div>
<div class="t" style="left:1738px;top:306.5px;letter-spacing:-0.147px;color:#ff0000;">M<sub>Ed</sub> = 295,12 kNm</div>
<div class="t" style="left:1788px;top:336.5px;letter-spacing:-0.586px;color:#ff0000;">0,00</div>
<div class="t" style="left:1876px;top:336.5px;letter-spacing:-0.781px;color:#ff0000;">108,77</div>
<div class="t" style="left:1995px;top:821.5px;letter-spacing:-0.781px;color:#ff0000;">256,21</div>
<div class="t" style="left:2027px;top:821.5px;letter-spacing:-0.781px;color:#ff0000;">295,12</div>
<div class="t" style="left:1783.7px;top:848.5px;color:#ff0000;">0</div>
<div class="t" style="left:2031px;top:848.5px;letter-spacing:-0.781px;color:#ff0000;">300,00</div>
<div class="t" style="left:2031px;top:864px;letter-spacing:0.134px;color:#ff0000;">[kNm]</div>
<div class="t" style="left:2236px;top:277px;letter-spacing:-0.092px;color:#000080;font-weight:bold;">Shear force</div>
<div class="t" style="left:2216.5px;top:291.5px;letter-spacing:-0.361px;color:#000080;">Max V<sub>Rd</sub> = 293,29 kN</div>
<div class="t" style="left:2229px;top:306.5px;letter-spacing:-0.357px;color:#000080;">V<sub>Ed</sub> = 178,80 kN</div>
<div class="t" style="left:2148px;top:336.5px;letter-spacing:-0.586px;color:#000080;">0,00</div>
<div class="t" style="left:2274px;top:336.5px;letter-spacing:-0.781px;color:#000080;">154,34</div>
<div class="t" style="left:2294px;top:821.5px;letter-spacing:-0.781px;color:#000080;">178,80</div>
<div class="t" style="left:2387px;top:821.5px;letter-spacing:-0.781px;color:#000080;">293,29</div>
<div class="t" style="left:2144.7px;top:848.5px;color:#000080;">0</div>
<div class="t" style="left:2391px;top:848.5px;letter-spacing:-0.781px;color:#000080;">300,00</div>
<div class="t" style="left:2391px;top:864px;letter-spacing:0.168px;color:#000080;">[kN]</div>
</body></html>
